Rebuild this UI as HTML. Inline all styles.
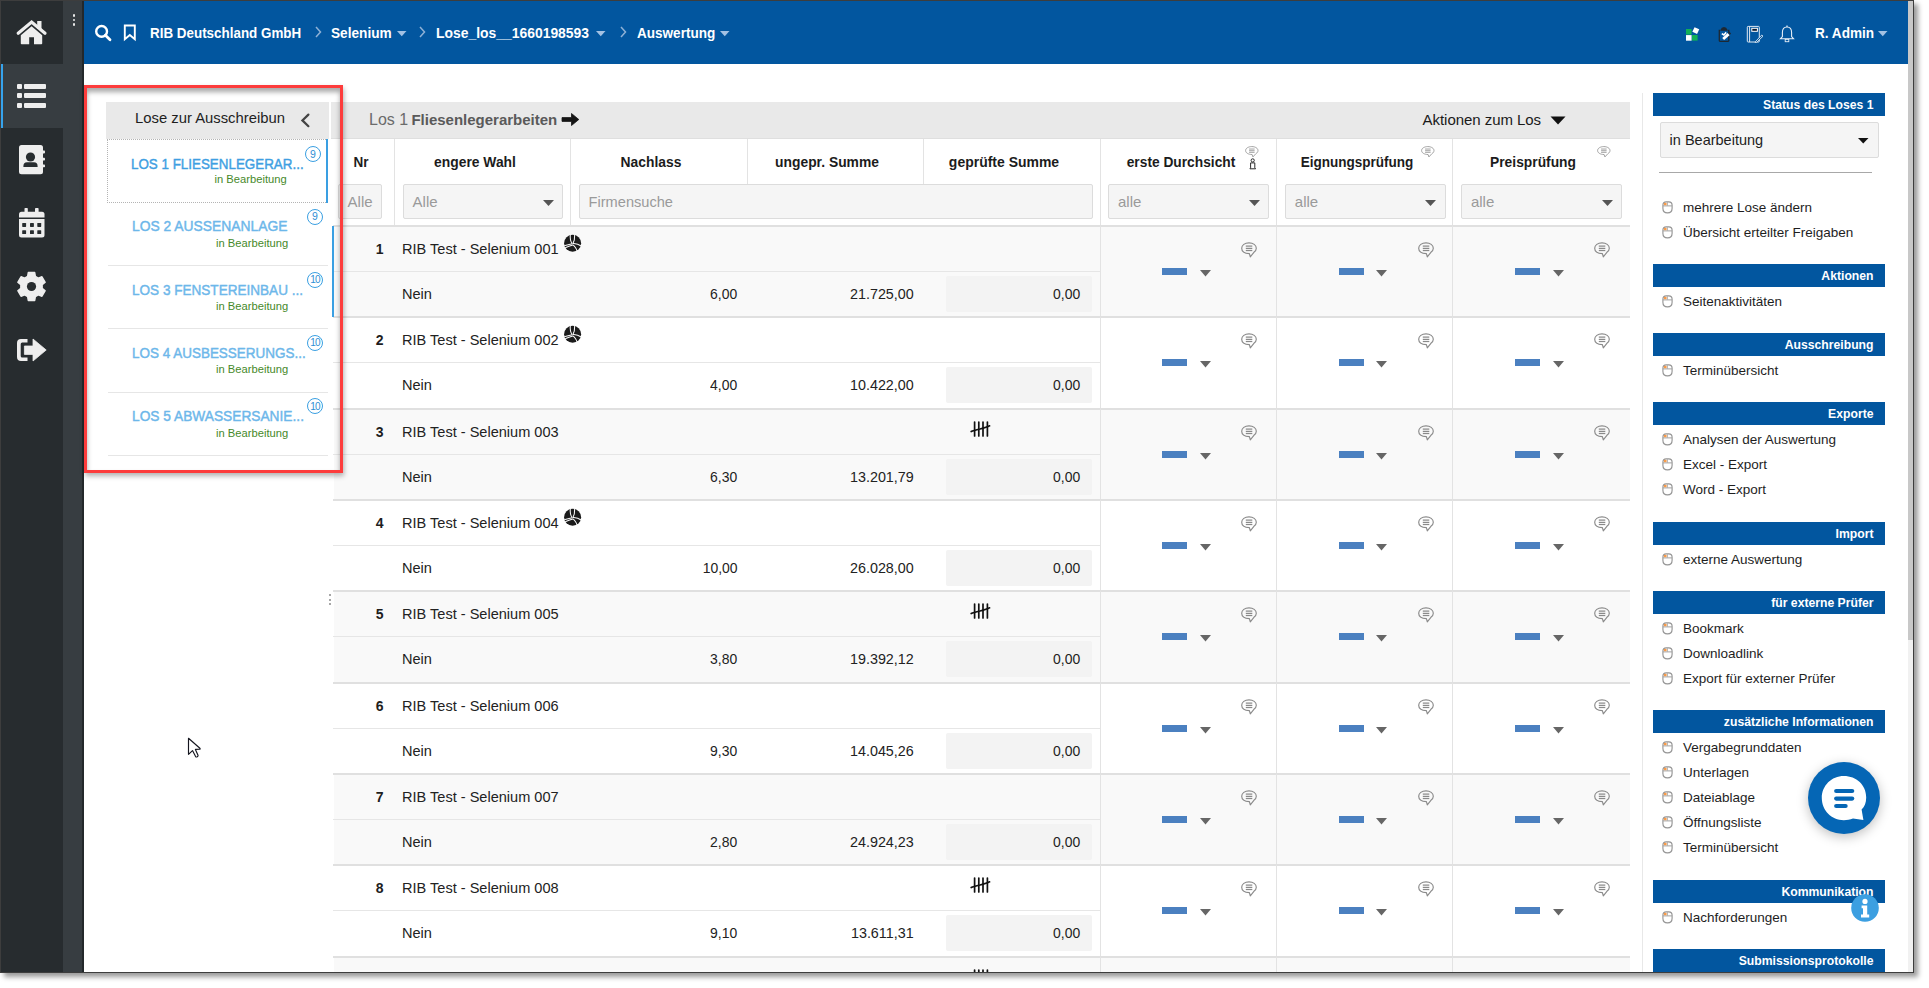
<!DOCTYPE html><html><head><meta charset="utf-8"><style>
html,body{margin:0;padding:0;width:1929px;height:988px;overflow:hidden;background:#fff;font-family:"Liberation Sans",sans-serif;}
.t{position:absolute;line-height:1;white-space:nowrap;}
svg{overflow:visible}
</style></head><body>
<div style="position:absolute;left:0px;top:0px;width:1914px;height:973px;background:#3d3d3d;box-shadow:4px 4px 5px 0 rgba(0,0,0,0.4);"></div>
<div style="position:absolute;left:1px;top:1px;width:1912px;height:971px;background:#fff;"></div>
<div style="position:absolute;left:0;top:0;width:1913px;height:972px;overflow:hidden">
<div style="position:absolute;left:1px;top:1px;width:62px;height:972px;background:#272c2f;"></div>
<div style="position:absolute;left:63px;top:1px;width:19px;height:972px;background:#373d41;"></div>
<div style="position:absolute;left:82px;top:1px;width:2px;height:972px;background:#23282b;"></div>
<div style="position:absolute;left:1px;top:64px;width:62px;height:64px;background:#373d41;"></div>
<div style="position:absolute;left:1px;top:64px;width:2px;height:64px;background:#36a3ec;"></div>
<div style="position:absolute;left:72.7px;top:13.85px;width:2.7px;height:2.7px;border-radius:50%;background:#e8e8e8"></div>
<div style="position:absolute;left:72.7px;top:18.549999999999997px;width:2.7px;height:2.7px;border-radius:50%;background:#e8e8e8"></div>
<div style="position:absolute;left:72.7px;top:23.25px;width:2.7px;height:2.7px;border-radius:50%;background:#e8e8e8"></div>
<svg style="position:absolute;left:17px;top:20px;" width="30" height="25" viewBox="0 0 30 25"><polyline points="1.2,13.2 14.6,2 28,13.2" fill="none" stroke="#eeeeee" stroke-width="3.2" stroke-linecap="round" stroke-linejoin="miter"/><rect x="20.2" y="1" width="4.3" height="8" fill="#eeeeee"/><path d="M3.8,15.2 L14.6,6.2 L25.2,15.2 L25.2,23.4 Q25.2,24.2 24.4,24.2 L17,24.2 L17,17.2 L12.2,17.2 L12.2,24.2 L4.6,24.2 Q3.8,24.2 3.8,23.4 Z" fill="#eeeeee"/></svg>
<div style="position:absolute;left:17.2px;top:84px;width:5.1px;height:5px;background:#eeeeee;border-radius:1px;"></div>
<div style="position:absolute;left:24.3px;top:84px;width:21.7px;height:5px;background:#eeeeee;border-radius:1px;"></div>
<div style="position:absolute;left:17.2px;top:93.3px;width:5.1px;height:5px;background:#eeeeee;border-radius:1px;"></div>
<div style="position:absolute;left:24.3px;top:93.3px;width:21.7px;height:5px;background:#eeeeee;border-radius:1px;"></div>
<div style="position:absolute;left:17.2px;top:102.6px;width:5.1px;height:5px;background:#eeeeee;border-radius:1px;"></div>
<div style="position:absolute;left:24.3px;top:102.6px;width:21.7px;height:5px;background:#eeeeee;border-radius:1px;"></div>
<svg style="position:absolute;left:18px;top:144px;" width="28" height="31" viewBox="0 0 28 31"><rect x="1" y="1" width="24" height="29.2" rx="2.5" fill="#eeeeee"/><rect x="24" y="6.6" width="3" height="2.8" rx="0.8" fill="#eeeeee"/><rect x="24" y="13.8" width="3" height="2.8" rx="0.8" fill="#eeeeee"/><rect x="24" y="20.5" width="3" height="2.8" rx="0.8" fill="#eeeeee"/><circle cx="12.5" cy="13" r="4.6" fill="#272c2f"/><path d="M5.4,22 Q5.4,18.4 9,18.2 L16,18.2 Q19.6,18.4 19.6,22 L19.6,23 L5.4,23 Z" fill="#272c2f"/></svg>
<svg style="position:absolute;left:18px;top:207px;" width="28" height="32" viewBox="0 0 28 32"><rect x="6.5" y="1" width="3.3" height="6" rx="0.8" fill="#eeeeee"/><rect x="17" y="1" width="3.6" height="6" rx="0.8" fill="#eeeeee"/><path d="M1,7.5 Q1,4.8 3.5,4.8 L24,4.8 Q26.5,4.8 26.5,7.5 L26.5,10.4 L1,10.4 Z" fill="#eeeeee"/><path d="M1,12 L26.5,12 L26.5,28 Q26.5,30.5 24,30.5 L3.5,30.5 Q1,30.5 1,28 Z" fill="#eeeeee"/><rect x="4.2" y="16" width="3.9" height="3.9" rx="0.6" fill="#272c2f"/><rect x="4.2" y="23.2" width="3.9" height="3.9" rx="0.6" fill="#272c2f"/><rect x="12" y="16" width="3.9" height="3.9" rx="0.6" fill="#272c2f"/><rect x="12" y="23.2" width="3.9" height="3.9" rx="0.6" fill="#272c2f"/><rect x="19.3" y="16" width="3.9" height="3.9" rx="0.6" fill="#272c2f"/><rect x="19.3" y="23.2" width="3.9" height="3.9" rx="0.6" fill="#272c2f"/></svg>
<svg style="position:absolute;left:18px;top:272px;" width="27" height="29" viewBox="0 0 27 29"><path d="M10.28,0.57 L16.72,0.57 L17.37,4.42 L20.30,6.11 L23.96,4.75 L27.18,10.32 L24.17,12.81 L24.17,16.19 L27.18,18.68 L23.96,24.25 L20.30,22.89 L17.37,24.58 L16.72,28.43 L10.28,28.43 L9.63,24.58 L6.70,22.89 L3.04,24.25 L-0.18,18.68 L2.83,16.19 L2.83,12.81 L-0.18,10.32 L3.04,4.75 L6.70,6.11 L9.63,4.42 Z" fill="#eeeeee" stroke="#eeeeee" stroke-width="1.4" stroke-linejoin="round"/><circle cx="13.5" cy="14.5" r="4.6" fill="#272c2f"/></svg>
<svg style="position:absolute;left:17px;top:338px;" width="30" height="24" viewBox="0 0 30 24"><path d="M10.5,1 L4,1 Q0,1 0,5 L0,19 Q0,23 4,23 L10.5,23 L10.5,19.4 L5.2,19.4 Q3.7,19.4 3.7,17.9 L3.7,6.1 Q3.7,4.6 5.2,4.6 L10.5,4.6 Z" fill="#eeeeee"/><path d="M7.4,8 L16,8 L16,1 L29.2,12 L16,23 L16,16.4 L7.4,16.4 Z" fill="#eeeeee" stroke="#eeeeee" stroke-width="0.8" stroke-linejoin="round"/></svg>
<div style="position:absolute;left:84px;top:1px;width:1824px;height:63px;background:#02569f;"></div>
<svg style="position:absolute;left:94px;top:24px;" width="18" height="18" viewBox="0 0 18 18"><circle cx="7.6" cy="7.4" r="5.4" fill="none" stroke="#fff" stroke-width="2.4"/><line x1="11.4" y1="11.3" x2="16" y2="15.8" stroke="#fff" stroke-width="2.8" stroke-linecap="round"/></svg>
<svg style="position:absolute;left:123px;top:24px;" width="14" height="17" viewBox="0 0 14 17"><path d="M1.8,1.5 L11.8,1.5 L11.8,15.2 L6.8,11 L1.8,15.2 Z" fill="none" stroke="#fff" stroke-width="1.9" stroke-linejoin="miter"/></svg>
<div class="t" style="top:25.03px;font-size:15.2px;font-weight:700;color:#fff;left:149.8px;transform:scaleX(0.8827);transform-origin:0 0;">RIB Deutschland GmbH</div>
<svg style="position:absolute;left:314.5px;top:26px;" width="7" height="12" viewBox="0 0 7 12"><polyline points="1,1 5.5,6 1,11" fill="none" stroke="#8fb1d6" stroke-width="1.5"/></svg>
<div class="t" style="top:25.03px;font-size:15.2px;font-weight:700;color:#fff;left:331.2px;transform:scaleX(0.899);transform-origin:0 0;">Selenium</div>
<svg style="position:absolute;left:397px;top:30.5px;" width="9.5" height="5.3" viewBox="0 0 9.5 5.3"><polygon points="0,0 9.5,0 4.75,5.3" fill="#a3c1e3"/></svg>
<svg style="position:absolute;left:418.5px;top:26px;" width="7" height="12" viewBox="0 0 7 12"><polyline points="1,1 5.5,6 1,11" fill="none" stroke="#8fb1d6" stroke-width="1.5"/></svg>
<div class="t" style="top:25.03px;font-size:15.2px;font-weight:700;color:#fff;left:436.4px;transform:scaleX(0.9154);transform-origin:0 0;">Lose_los__1660198593</div>
<svg style="position:absolute;left:596px;top:30.5px;" width="9.5" height="5.3" viewBox="0 0 9.5 5.3"><polygon points="0,0 9.5,0 4.75,5.3" fill="#a3c1e3"/></svg>
<svg style="position:absolute;left:619.5px;top:26px;" width="7" height="12" viewBox="0 0 7 12"><polyline points="1,1 5.5,6 1,11" fill="none" stroke="#8fb1d6" stroke-width="1.5"/></svg>
<div class="t" style="top:25.03px;font-size:15.2px;font-weight:700;color:#fff;left:636.6px;transform:scaleX(0.8913);transform-origin:0 0;">Auswertung</div>
<svg style="position:absolute;left:720px;top:30.5px;" width="9.5" height="5.3" viewBox="0 0 9.5 5.3"><polygon points="0,0 9.5,0 4.75,5.3" fill="#a3c1e3"/></svg>
<div class="t" style="top:25.03px;font-size:15.2px;font-weight:700;color:#fff;left:1814.6px;transform:scaleX(0.8942);transform-origin:0 0;">R. Admin</div>
<svg style="position:absolute;left:1878px;top:30.5px;" width="9.5" height="5.3" viewBox="0 0 9.5 5.3"><polygon points="0,0 9.5,0 4.75,5.3" fill="#a3c1e3"/></svg>
<svg style="position:absolute;left:1685px;top:26px;" width="16" height="16" viewBox="0 0 16 16"><rect x="1" y="3" width="5.6" height="5.6" fill="#12b057"/><rect x="7" y="9" width="5.6" height="5.6" fill="#12b057"/><rect x="1" y="9.1" width="5.6" height="5.6" fill="#fff"/><rect x="8.2" y="2" width="5.2" height="5.2" fill="#fff" transform="rotate(25 10.8 4.6)"/></svg>
<svg style="position:absolute;left:1718px;top:26px;" width="15" height="17" viewBox="0 0 15 17"><path d="M2.4,4.4 L1.3,4.4 L1.3,14.6 Q1.3,15.3 2,15.3 L10.1,15.3 Q10.8,15.3 10.8,14.6 L10.8,4.4 L9.6,4.4" fill="none" stroke="#1d2833" stroke-width="1.3"/><path d="M2.8,4.8 L2.8,3.6 Q3.2,1.2 6,1.1 Q8.8,1.2 9.2,3.6 L9.2,4.8 Z" fill="#1d2833"/><polyline points="3.8,7.6 5.9,9 8.2,6.4" fill="none" stroke="#fff" stroke-width="1.6"/><line x1="5.2" y1="13" x2="10.6" y2="8.1" stroke="#fff" stroke-width="2.8"/><line x1="10.6" y1="6.1" x2="12.6" y2="7.9" stroke="#1d2833" stroke-width="1.3"/></svg>
<svg style="position:absolute;left:1746px;top:25px;" width="18" height="18" viewBox="0 0 18 18"><rect x="1.3" y="1.4" width="12" height="15.6" rx="0.8" fill="none" stroke="#dfe8f2" stroke-width="1"/><line x1="3.6" y1="1.4" x2="3.6" y2="17" stroke="#dfe8f2" stroke-width="1"/><rect x="5.8" y="3.3" width="5.6" height="3" fill="#0a1a30" stroke="#fff" stroke-width="1"/><path d="M9.5,16.5 L15.8,10 L17,11.2 L10.8,17.2 L9,17.4 Z" fill="#02569f" stroke="#dfe8f2" stroke-width="0.9"/></svg>
<svg style="position:absolute;left:1779px;top:25px;" width="16" height="18" viewBox="0 0 16 18"><path d="M8,2 Q12.6,2 12.6,7.5 L12.6,11.5 L14.6,13.8 L1.4,13.8 L3.4,11.5 L3.4,7.5 Q3.4,2 8,2 Z" fill="none" stroke="#e6eef7" stroke-width="1.1"/><line x1="8" y1="0.6" x2="8" y2="2" stroke="#e6eef7" stroke-width="1.2"/><rect x="6.2" y="14.3" width="3.6" height="2.4" fill="none" stroke="#e6eef7" stroke-width="0.9"/></svg>
<div style="position:absolute;left:331px;top:102px;width:1299px;height:37px;background:#e9e9e9;"></div>
<div style="position:absolute;left:331px;top:138px;width:1299px;height:1px;background:#dfdfdf;"></div>
<div class="t" style="top:111.55px;font-size:16px;font-weight:400;color:#6b6b6b;left:369px;">Los 1</div>
<div class="t" style="top:112.40px;font-size:15px;font-weight:700;color:#5a5a5a;left:411.4px;">Fliesenlegerarbeiten</div>
<svg style="position:absolute;left:561px;top:112px;" width="19" height="15" viewBox="0 0 19 15"><path d="M1,5.6 L10.5,5.6 L10.5,1.5 L17.8,7.5 L10.5,13.5 L10.5,9.4 L1,9.4 Z" fill="#151515" stroke="#151515" stroke-width="0.8" stroke-linejoin="round"/></svg>
<div class="t" style="top:112.30px;font-size:15px;font-weight:400;color:#1a1a1a;letter-spacing:-0.05px;left:1422.6px;">Aktionen zum Los</div>
<svg style="position:absolute;left:1550px;top:115.5px;" width="16" height="9" viewBox="0 0 16 9"><polygon points="0.5,0.5 15.5,0.5 8,8.5" fill="#111"/></svg>
<div style="position:absolute;left:394px;top:139px;width:1px;height:87px;background:#e3e3e3;"></div>
<div style="position:absolute;left:570px;top:139px;width:1px;height:87px;background:#e3e3e3;"></div>
<div style="position:absolute;left:747px;top:139px;width:1px;height:45px;background:#e3e3e3;"></div>
<div style="position:absolute;left:923px;top:139px;width:1px;height:45px;background:#e3e3e3;"></div>
<div style="position:absolute;left:1100px;top:139px;width:1px;height:87px;background:#e3e3e3;"></div>
<div style="position:absolute;left:1276px;top:139px;width:1px;height:87px;background:#e3e3e3;"></div>
<div style="position:absolute;left:1452px;top:139px;width:1px;height:87px;background:#e3e3e3;"></div>
<div class="t" style="top:154.10px;font-size:15px;font-weight:700;color:#1c1c1c;left:360.5px;transform:translateX(-50%) scaleX(0.9);transform-origin:50% 0;">Nr</div>
<div class="t" style="top:154.10px;font-size:15px;font-weight:700;color:#1c1c1c;left:474.6px;transform:translateX(-50%) scaleX(0.923);transform-origin:50% 0;">engere Wahl</div>
<div class="t" style="top:154.10px;font-size:15px;font-weight:700;color:#1c1c1c;left:651.3px;transform:translateX(-50%) scaleX(0.924);transform-origin:50% 0;">Nachlass</div>
<div class="t" style="top:154.10px;font-size:15px;font-weight:700;color:#1c1c1c;left:827.4px;transform:translateX(-50%) scaleX(0.923);transform-origin:50% 0;">ungepr. Summe</div>
<div class="t" style="top:154.10px;font-size:15px;font-weight:700;color:#1c1c1c;left:1004px;transform:translateX(-50%) scaleX(0.932);transform-origin:50% 0;">geprüfte Summe</div>
<div class="t" style="top:154.10px;font-size:15px;font-weight:700;color:#1c1c1c;left:1180.6px;transform:translateX(-50%) scaleX(0.917);transform-origin:50% 0;">erste Durchsicht</div>
<div class="t" style="top:154.10px;font-size:15px;font-weight:700;color:#1c1c1c;left:1356.7px;transform:translateX(-50%) scaleX(0.902);transform-origin:50% 0;">Eignungsprüfung</div>
<div class="t" style="top:154.10px;font-size:15px;font-weight:700;color:#1c1c1c;left:1533.3px;transform:translateX(-50%) scaleX(0.921);transform-origin:50% 0;">Preisprüfung</div>
<svg style="position:absolute;left:1244.6px;top:145.5px;" width="13.6" height="11.84" viewBox="0 0 13.6 11.84"><g transform="scale(0.85,0.74)"><path d="M8.4,11.6 C3.6,11.4 0.7,9.1 0.7,6.2 C0.7,3.1 3.8,0.8 8,0.8 C12.2,0.8 15.3,3.1 15.3,6.2 C15.3,7.9 14.3,9.3 12.9,10.3 L9.3,14.8 Z" fill="none" stroke="#9a9a9a" stroke-width="1.15" stroke-linejoin="round"/><g stroke="#9a9a9a" stroke-width="1.25"><line x1="4.8" y1="4.1" x2="11.3" y2="4.1"/><line x1="4.8" y1="6.4" x2="11.3" y2="6.4"/><line x1="4.8" y1="8.5" x2="11.3" y2="8.5"/></g></g></svg>
<svg style="position:absolute;left:1249px;top:157.5px;" width="9" height="13" viewBox="0 0 9 13"><circle cx="3.7" cy="2.4" r="1.6" fill="#fff" stroke="#2a2a2a" stroke-width="1"/><path d="M1.6,4.9 L5.8,4.9 L5.8,9.9 L6.6,10.8 L0.9,10.8 L1.6,9.9 Z" fill="#fff" stroke="#2a2a2a" stroke-width="1" stroke-linejoin="round"/></svg>
<svg style="position:absolute;left:1420.8px;top:145.5px;" width="13.6" height="11.84" viewBox="0 0 13.6 11.84"><g transform="scale(0.85,0.74)"><path d="M8.4,11.6 C3.6,11.4 0.7,9.1 0.7,6.2 C0.7,3.1 3.8,0.8 8,0.8 C12.2,0.8 15.3,3.1 15.3,6.2 C15.3,7.9 14.3,9.3 12.9,10.3 L9.3,14.8 Z" fill="none" stroke="#9a9a9a" stroke-width="1.15" stroke-linejoin="round"/><g stroke="#9a9a9a" stroke-width="1.25"><line x1="4.8" y1="4.1" x2="11.3" y2="4.1"/><line x1="4.8" y1="6.4" x2="11.3" y2="6.4"/><line x1="4.8" y1="8.5" x2="11.3" y2="8.5"/></g></g></svg>
<svg style="position:absolute;left:1597px;top:145.5px;" width="13.6" height="11.84" viewBox="0 0 13.6 11.84"><g transform="scale(0.85,0.74)"><path d="M8.4,11.6 C3.6,11.4 0.7,9.1 0.7,6.2 C0.7,3.1 3.8,0.8 8,0.8 C12.2,0.8 15.3,3.1 15.3,6.2 C15.3,7.9 14.3,9.3 12.9,10.3 L9.3,14.8 Z" fill="none" stroke="#9a9a9a" stroke-width="1.15" stroke-linejoin="round"/><g stroke="#9a9a9a" stroke-width="1.25"><line x1="4.8" y1="4.1" x2="11.3" y2="4.1"/><line x1="4.8" y1="6.4" x2="11.3" y2="6.4"/><line x1="4.8" y1="8.5" x2="11.3" y2="8.5"/></g></g></svg>
<div style="position:absolute;left:338px;top:184px;width:44px;height:35px;background:#f5f5f5;border:1px solid #dcdcdc;border-radius:2px;box-sizing:border-box;"></div>
<div class="t" style="top:194.20px;font-size:15px;font-weight:400;color:#9a9a9a;left:347.6px;">Alle</div>
<div style="position:absolute;left:403px;top:184px;width:160px;height:35px;background:#f5f5f5;border:1px solid #dcdcdc;border-radius:2px;box-sizing:border-box;"></div>
<div class="t" style="top:194.20px;font-size:15px;font-weight:400;color:#9a9a9a;left:412.6px;">Alle</div>
<svg style="position:absolute;left:542.7px;top:199.6px;" width="11" height="6" viewBox="0 0 11 6"><polygon points="0,0 11,0 5.5,6" fill="#555"/></svg>
<div style="position:absolute;left:579px;top:184px;width:514px;height:35px;background:#f5f5f5;border:1px solid #dcdcdc;border-radius:2px;box-sizing:border-box;"></div>
<div class="t" style="top:194.54px;font-size:14.6px;font-weight:400;color:#9a9a9a;left:588.6px;">Firmensuche</div>
<div style="position:absolute;left:1108.4px;top:184px;width:160.6px;height:35px;background:#f5f5f5;border:1px solid #dcdcdc;border-radius:2px;box-sizing:border-box;"></div>
<div class="t" style="top:194.20px;font-size:15px;font-weight:400;color:#9a9a9a;left:1118.0px;">alle</div>
<svg style="position:absolute;left:1248.7px;top:199.6px;" width="11" height="6" viewBox="0 0 11 6"><polygon points="0,0 11,0 5.5,6" fill="#555"/></svg>
<div style="position:absolute;left:1285.2px;top:184px;width:160.5px;height:35px;background:#f5f5f5;border:1px solid #dcdcdc;border-radius:2px;box-sizing:border-box;"></div>
<div class="t" style="top:194.20px;font-size:15px;font-weight:400;color:#9a9a9a;left:1294.8px;">alle</div>
<svg style="position:absolute;left:1425.4px;top:199.6px;" width="11" height="6" viewBox="0 0 11 6"><polygon points="0,0 11,0 5.5,6" fill="#555"/></svg>
<div style="position:absolute;left:1461.3px;top:184px;width:160.5px;height:35px;background:#f5f5f5;border:1px solid #dcdcdc;border-radius:2px;box-sizing:border-box;"></div>
<div class="t" style="top:194.20px;font-size:15px;font-weight:400;color:#9a9a9a;left:1470.8999999999999px;">alle</div>
<svg style="position:absolute;left:1601.5px;top:199.6px;" width="11" height="6" viewBox="0 0 11 6"><polygon points="0,0 11,0 5.5,6" fill="#555"/></svg>
<div style="position:absolute;left:333px;top:225px;width:1297px;height:2px;background:#e0e0e0;"></div>
<div style="position:absolute;left:334px;top:226px;width:1296px;height:91px;background:#f9f9f9;"></div>
<div style="position:absolute;left:333px;top:225px;width:1297px;height:2px;background:#e0e0e0;"></div>
<div style="position:absolute;left:333px;top:271px;width:767px;height:1px;background:#e6e6e6;"></div>
<div style="position:absolute;left:1100px;top:226px;width:1px;height:91px;background:#e3e3e3;"></div>
<div style="position:absolute;left:1276px;top:226px;width:1px;height:91px;background:#e3e3e3;"></div>
<div style="position:absolute;left:1452px;top:226px;width:1px;height:91px;background:#e3e3e3;"></div>
<div class="t" style="top:242.15px;font-size:14px;font-weight:700;color:#1e1e1e;right:1529.5px;">1</div>
<div class="t" style="top:241.30px;font-size:15px;font-weight:400;color:#222;left:402.4px;transform:scaleX(0.97);transform-origin:0 0;">RIB Test - Selenium 001</div>
<svg style="position:absolute;left:562.0px;top:232.0px;" width="22" height="22" viewBox="0 0 22 22"><circle cx="10.6" cy="11.2" r="8.5" fill="#1b1b1b"/><g fill="none" stroke="#fafafa" stroke-width="1.05"><path d="M8.3,2.4 Q7.7,8.2 10.2,11.8"/><path d="M12.7,2.6 Q12.9,8.4 10.8,11.8"/><path d="M10.8,11.6 Q15.2,11.2 19.6,14.2"/><path d="M10.6,12.6 Q13.8,14.6 15.4,19.8"/><path d="M10.2,11.8 Q6,12.8 2.2,13.8"/><path d="M3.2,15.8 Q7,14 10.8,13"/></g></svg>
<div class="t" style="top:285.70px;font-size:15px;font-weight:400;color:#222;left:402.4px;transform:scaleX(0.97);transform-origin:0 0;">Nein</div>
<div class="t" style="top:285.70px;font-size:15px;font-weight:400;color:#222;right:1175.6px;transform:scaleX(0.93);transform-origin:100% 0;">6,00</div>
<div class="t" style="top:285.70px;font-size:15px;font-weight:400;color:#222;right:999.6px;transform:scaleX(0.955);transform-origin:100% 0;">21.725,00</div>
<div style="position:absolute;left:946px;top:276px;width:145.5px;height:35.5px;background:#f3f3f3;border-radius:2px;"></div>
<div class="t" style="top:285.70px;font-size:15px;font-weight:400;color:#222;right:832.4000000000001px;transform:scaleX(0.93);transform-origin:100% 0;">0,00</div>
<svg style="position:absolute;left:1241px;top:241.5px;" width="16.0" height="16.0" viewBox="0 0 16.0 16.0"><g transform="scale(1.0,1.0)"><path d="M8.4,11.6 C3.6,11.4 0.7,9.1 0.7,6.2 C0.7,3.1 3.8,0.8 8,0.8 C12.2,0.8 15.3,3.1 15.3,6.2 C15.3,7.9 14.3,9.3 12.9,10.3 L9.3,14.8 Z" fill="none" stroke="#8a8a8a" stroke-width="1.15" stroke-linejoin="round"/><g stroke="#8a8a8a" stroke-width="1.25"><line x1="4.8" y1="4.1" x2="11.3" y2="4.1"/><line x1="4.8" y1="6.4" x2="11.3" y2="6.4"/><line x1="4.8" y1="8.5" x2="11.3" y2="8.5"/></g></g></svg>
<div style="position:absolute;left:1162px;top:267.7px;width:25.2px;height:7.2px;background:#4b80c0;"></div>
<svg style="position:absolute;left:1199.8px;top:269.5px;" width="11" height="6.5" viewBox="0 0 11 6.5"><polygon points="0,0 11,0 5.5,6.5" fill="#666"/></svg>
<svg style="position:absolute;left:1417.6px;top:241.5px;" width="16.0" height="16.0" viewBox="0 0 16.0 16.0"><g transform="scale(1.0,1.0)"><path d="M8.4,11.6 C3.6,11.4 0.7,9.1 0.7,6.2 C0.7,3.1 3.8,0.8 8,0.8 C12.2,0.8 15.3,3.1 15.3,6.2 C15.3,7.9 14.3,9.3 12.9,10.3 L9.3,14.8 Z" fill="none" stroke="#8a8a8a" stroke-width="1.15" stroke-linejoin="round"/><g stroke="#8a8a8a" stroke-width="1.25"><line x1="4.8" y1="4.1" x2="11.3" y2="4.1"/><line x1="4.8" y1="6.4" x2="11.3" y2="6.4"/><line x1="4.8" y1="8.5" x2="11.3" y2="8.5"/></g></g></svg>
<div style="position:absolute;left:1338.6px;top:267.7px;width:25.2px;height:7.2px;background:#4b80c0;"></div>
<svg style="position:absolute;left:1376.3999999999999px;top:269.5px;" width="11" height="6.5" viewBox="0 0 11 6.5"><polygon points="0,0 11,0 5.5,6.5" fill="#666"/></svg>
<svg style="position:absolute;left:1594.2px;top:241.5px;" width="16.0" height="16.0" viewBox="0 0 16.0 16.0"><g transform="scale(1.0,1.0)"><path d="M8.4,11.6 C3.6,11.4 0.7,9.1 0.7,6.2 C0.7,3.1 3.8,0.8 8,0.8 C12.2,0.8 15.3,3.1 15.3,6.2 C15.3,7.9 14.3,9.3 12.9,10.3 L9.3,14.8 Z" fill="none" stroke="#8a8a8a" stroke-width="1.15" stroke-linejoin="round"/><g stroke="#8a8a8a" stroke-width="1.25"><line x1="4.8" y1="4.1" x2="11.3" y2="4.1"/><line x1="4.8" y1="6.4" x2="11.3" y2="6.4"/><line x1="4.8" y1="8.5" x2="11.3" y2="8.5"/></g></g></svg>
<div style="position:absolute;left:1515.2px;top:267.7px;width:25.2px;height:7.2px;background:#4b80c0;"></div>
<svg style="position:absolute;left:1553.0px;top:269.5px;" width="11" height="6.5" viewBox="0 0 11 6.5"><polygon points="0,0 11,0 5.5,6.5" fill="#666"/></svg>
<div style="position:absolute;left:334px;top:317px;width:1296px;height:92px;background:#ffffff;"></div>
<div style="position:absolute;left:333px;top:316px;width:1297px;height:2px;background:#e0e0e0;"></div>
<div style="position:absolute;left:333px;top:362px;width:767px;height:1px;background:#e6e6e6;"></div>
<div style="position:absolute;left:1100px;top:317px;width:1px;height:92px;background:#e3e3e3;"></div>
<div style="position:absolute;left:1276px;top:317px;width:1px;height:92px;background:#e3e3e3;"></div>
<div style="position:absolute;left:1452px;top:317px;width:1px;height:92px;background:#e3e3e3;"></div>
<div class="t" style="top:333.15px;font-size:14px;font-weight:700;color:#1e1e1e;right:1529.5px;">2</div>
<div class="t" style="top:332.30px;font-size:15px;font-weight:400;color:#222;left:402.4px;transform:scaleX(0.97);transform-origin:0 0;">RIB Test - Selenium 002</div>
<svg style="position:absolute;left:562.0px;top:323.0px;" width="22" height="22" viewBox="0 0 22 22"><circle cx="10.6" cy="11.2" r="8.5" fill="#1b1b1b"/><g fill="none" stroke="#fafafa" stroke-width="1.05"><path d="M8.3,2.4 Q7.7,8.2 10.2,11.8"/><path d="M12.7,2.6 Q12.9,8.4 10.8,11.8"/><path d="M10.8,11.6 Q15.2,11.2 19.6,14.2"/><path d="M10.6,12.6 Q13.8,14.6 15.4,19.8"/><path d="M10.2,11.8 Q6,12.8 2.2,13.8"/><path d="M3.2,15.8 Q7,14 10.8,13"/></g></svg>
<div class="t" style="top:376.70px;font-size:15px;font-weight:400;color:#222;left:402.4px;transform:scaleX(0.97);transform-origin:0 0;">Nein</div>
<div class="t" style="top:376.70px;font-size:15px;font-weight:400;color:#222;right:1175.6px;transform:scaleX(0.93);transform-origin:100% 0;">4,00</div>
<div class="t" style="top:376.70px;font-size:15px;font-weight:400;color:#222;right:999.6px;transform:scaleX(0.955);transform-origin:100% 0;">10.422,00</div>
<div style="position:absolute;left:946px;top:367px;width:145.5px;height:35.5px;background:#f3f3f3;border-radius:2px;"></div>
<div class="t" style="top:376.70px;font-size:15px;font-weight:400;color:#222;right:832.4000000000001px;transform:scaleX(0.93);transform-origin:100% 0;">0,00</div>
<svg style="position:absolute;left:1241px;top:332.5px;" width="16.0" height="16.0" viewBox="0 0 16.0 16.0"><g transform="scale(1.0,1.0)"><path d="M8.4,11.6 C3.6,11.4 0.7,9.1 0.7,6.2 C0.7,3.1 3.8,0.8 8,0.8 C12.2,0.8 15.3,3.1 15.3,6.2 C15.3,7.9 14.3,9.3 12.9,10.3 L9.3,14.8 Z" fill="none" stroke="#8a8a8a" stroke-width="1.15" stroke-linejoin="round"/><g stroke="#8a8a8a" stroke-width="1.25"><line x1="4.8" y1="4.1" x2="11.3" y2="4.1"/><line x1="4.8" y1="6.4" x2="11.3" y2="6.4"/><line x1="4.8" y1="8.5" x2="11.3" y2="8.5"/></g></g></svg>
<div style="position:absolute;left:1162px;top:358.7px;width:25.2px;height:7.2px;background:#4b80c0;"></div>
<svg style="position:absolute;left:1199.8px;top:360.5px;" width="11" height="6.5" viewBox="0 0 11 6.5"><polygon points="0,0 11,0 5.5,6.5" fill="#666"/></svg>
<svg style="position:absolute;left:1417.6px;top:332.5px;" width="16.0" height="16.0" viewBox="0 0 16.0 16.0"><g transform="scale(1.0,1.0)"><path d="M8.4,11.6 C3.6,11.4 0.7,9.1 0.7,6.2 C0.7,3.1 3.8,0.8 8,0.8 C12.2,0.8 15.3,3.1 15.3,6.2 C15.3,7.9 14.3,9.3 12.9,10.3 L9.3,14.8 Z" fill="none" stroke="#8a8a8a" stroke-width="1.15" stroke-linejoin="round"/><g stroke="#8a8a8a" stroke-width="1.25"><line x1="4.8" y1="4.1" x2="11.3" y2="4.1"/><line x1="4.8" y1="6.4" x2="11.3" y2="6.4"/><line x1="4.8" y1="8.5" x2="11.3" y2="8.5"/></g></g></svg>
<div style="position:absolute;left:1338.6px;top:358.7px;width:25.2px;height:7.2px;background:#4b80c0;"></div>
<svg style="position:absolute;left:1376.3999999999999px;top:360.5px;" width="11" height="6.5" viewBox="0 0 11 6.5"><polygon points="0,0 11,0 5.5,6.5" fill="#666"/></svg>
<svg style="position:absolute;left:1594.2px;top:332.5px;" width="16.0" height="16.0" viewBox="0 0 16.0 16.0"><g transform="scale(1.0,1.0)"><path d="M8.4,11.6 C3.6,11.4 0.7,9.1 0.7,6.2 C0.7,3.1 3.8,0.8 8,0.8 C12.2,0.8 15.3,3.1 15.3,6.2 C15.3,7.9 14.3,9.3 12.9,10.3 L9.3,14.8 Z" fill="none" stroke="#8a8a8a" stroke-width="1.15" stroke-linejoin="round"/><g stroke="#8a8a8a" stroke-width="1.25"><line x1="4.8" y1="4.1" x2="11.3" y2="4.1"/><line x1="4.8" y1="6.4" x2="11.3" y2="6.4"/><line x1="4.8" y1="8.5" x2="11.3" y2="8.5"/></g></g></svg>
<div style="position:absolute;left:1515.2px;top:358.7px;width:25.2px;height:7.2px;background:#4b80c0;"></div>
<svg style="position:absolute;left:1553.0px;top:360.5px;" width="11" height="6.5" viewBox="0 0 11 6.5"><polygon points="0,0 11,0 5.5,6.5" fill="#666"/></svg>
<div style="position:absolute;left:334px;top:409px;width:1296px;height:91px;background:#f9f9f9;"></div>
<div style="position:absolute;left:333px;top:408px;width:1297px;height:2px;background:#e0e0e0;"></div>
<div style="position:absolute;left:333px;top:454px;width:767px;height:1px;background:#e6e6e6;"></div>
<div style="position:absolute;left:1100px;top:409px;width:1px;height:91px;background:#e3e3e3;"></div>
<div style="position:absolute;left:1276px;top:409px;width:1px;height:91px;background:#e3e3e3;"></div>
<div style="position:absolute;left:1452px;top:409px;width:1px;height:91px;background:#e3e3e3;"></div>
<div class="t" style="top:425.15px;font-size:14px;font-weight:700;color:#1e1e1e;right:1529.5px;">3</div>
<div class="t" style="top:424.30px;font-size:15px;font-weight:400;color:#222;left:402.4px;transform:scaleX(0.97);transform-origin:0 0;">RIB Test - Selenium 003</div>
<svg style="position:absolute;left:969.5px;top:421px;" width="22" height="16" viewBox="0 0 22 16"><g stroke="#111" stroke-width="1.7" stroke-linecap="round"><line x1="4.6" y1="1" x2="4.6" y2="15"/><line x1="8.8" y1="1" x2="8.8" y2="15"/><line x1="13" y1="1" x2="13" y2="15"/><line x1="17.4" y1="1" x2="17.4" y2="15"/><path d="M1.2,10.6 Q3,9.6 10,8 Q17,6.2 19.6,4.8" fill="none"/></g></svg>
<div class="t" style="top:468.70px;font-size:15px;font-weight:400;color:#222;left:402.4px;transform:scaleX(0.97);transform-origin:0 0;">Nein</div>
<div class="t" style="top:468.70px;font-size:15px;font-weight:400;color:#222;right:1175.6px;transform:scaleX(0.93);transform-origin:100% 0;">6,30</div>
<div class="t" style="top:468.70px;font-size:15px;font-weight:400;color:#222;right:999.6px;transform:scaleX(0.955);transform-origin:100% 0;">13.201,79</div>
<div style="position:absolute;left:946px;top:459px;width:145.5px;height:35.5px;background:#f3f3f3;border-radius:2px;"></div>
<div class="t" style="top:468.70px;font-size:15px;font-weight:400;color:#222;right:832.4000000000001px;transform:scaleX(0.93);transform-origin:100% 0;">0,00</div>
<svg style="position:absolute;left:1241px;top:424.5px;" width="16.0" height="16.0" viewBox="0 0 16.0 16.0"><g transform="scale(1.0,1.0)"><path d="M8.4,11.6 C3.6,11.4 0.7,9.1 0.7,6.2 C0.7,3.1 3.8,0.8 8,0.8 C12.2,0.8 15.3,3.1 15.3,6.2 C15.3,7.9 14.3,9.3 12.9,10.3 L9.3,14.8 Z" fill="none" stroke="#8a8a8a" stroke-width="1.15" stroke-linejoin="round"/><g stroke="#8a8a8a" stroke-width="1.25"><line x1="4.8" y1="4.1" x2="11.3" y2="4.1"/><line x1="4.8" y1="6.4" x2="11.3" y2="6.4"/><line x1="4.8" y1="8.5" x2="11.3" y2="8.5"/></g></g></svg>
<div style="position:absolute;left:1162px;top:450.7px;width:25.2px;height:7.2px;background:#4b80c0;"></div>
<svg style="position:absolute;left:1199.8px;top:452.5px;" width="11" height="6.5" viewBox="0 0 11 6.5"><polygon points="0,0 11,0 5.5,6.5" fill="#666"/></svg>
<svg style="position:absolute;left:1417.6px;top:424.5px;" width="16.0" height="16.0" viewBox="0 0 16.0 16.0"><g transform="scale(1.0,1.0)"><path d="M8.4,11.6 C3.6,11.4 0.7,9.1 0.7,6.2 C0.7,3.1 3.8,0.8 8,0.8 C12.2,0.8 15.3,3.1 15.3,6.2 C15.3,7.9 14.3,9.3 12.9,10.3 L9.3,14.8 Z" fill="none" stroke="#8a8a8a" stroke-width="1.15" stroke-linejoin="round"/><g stroke="#8a8a8a" stroke-width="1.25"><line x1="4.8" y1="4.1" x2="11.3" y2="4.1"/><line x1="4.8" y1="6.4" x2="11.3" y2="6.4"/><line x1="4.8" y1="8.5" x2="11.3" y2="8.5"/></g></g></svg>
<div style="position:absolute;left:1338.6px;top:450.7px;width:25.2px;height:7.2px;background:#4b80c0;"></div>
<svg style="position:absolute;left:1376.3999999999999px;top:452.5px;" width="11" height="6.5" viewBox="0 0 11 6.5"><polygon points="0,0 11,0 5.5,6.5" fill="#666"/></svg>
<svg style="position:absolute;left:1594.2px;top:424.5px;" width="16.0" height="16.0" viewBox="0 0 16.0 16.0"><g transform="scale(1.0,1.0)"><path d="M8.4,11.6 C3.6,11.4 0.7,9.1 0.7,6.2 C0.7,3.1 3.8,0.8 8,0.8 C12.2,0.8 15.3,3.1 15.3,6.2 C15.3,7.9 14.3,9.3 12.9,10.3 L9.3,14.8 Z" fill="none" stroke="#8a8a8a" stroke-width="1.15" stroke-linejoin="round"/><g stroke="#8a8a8a" stroke-width="1.25"><line x1="4.8" y1="4.1" x2="11.3" y2="4.1"/><line x1="4.8" y1="6.4" x2="11.3" y2="6.4"/><line x1="4.8" y1="8.5" x2="11.3" y2="8.5"/></g></g></svg>
<div style="position:absolute;left:1515.2px;top:450.7px;width:25.2px;height:7.2px;background:#4b80c0;"></div>
<svg style="position:absolute;left:1553.0px;top:452.5px;" width="11" height="6.5" viewBox="0 0 11 6.5"><polygon points="0,0 11,0 5.5,6.5" fill="#666"/></svg>
<div style="position:absolute;left:334px;top:500px;width:1296px;height:91px;background:#ffffff;"></div>
<div style="position:absolute;left:333px;top:499px;width:1297px;height:2px;background:#e0e0e0;"></div>
<div style="position:absolute;left:333px;top:545px;width:767px;height:1px;background:#e6e6e6;"></div>
<div style="position:absolute;left:1100px;top:500px;width:1px;height:91px;background:#e3e3e3;"></div>
<div style="position:absolute;left:1276px;top:500px;width:1px;height:91px;background:#e3e3e3;"></div>
<div style="position:absolute;left:1452px;top:500px;width:1px;height:91px;background:#e3e3e3;"></div>
<div class="t" style="top:516.15px;font-size:14px;font-weight:700;color:#1e1e1e;right:1529.5px;">4</div>
<div class="t" style="top:515.30px;font-size:15px;font-weight:400;color:#222;left:402.4px;transform:scaleX(0.97);transform-origin:0 0;">RIB Test - Selenium 004</div>
<svg style="position:absolute;left:562.0px;top:506.0px;" width="22" height="22" viewBox="0 0 22 22"><circle cx="10.6" cy="11.2" r="8.5" fill="#1b1b1b"/><g fill="none" stroke="#fafafa" stroke-width="1.05"><path d="M8.3,2.4 Q7.7,8.2 10.2,11.8"/><path d="M12.7,2.6 Q12.9,8.4 10.8,11.8"/><path d="M10.8,11.6 Q15.2,11.2 19.6,14.2"/><path d="M10.6,12.6 Q13.8,14.6 15.4,19.8"/><path d="M10.2,11.8 Q6,12.8 2.2,13.8"/><path d="M3.2,15.8 Q7,14 10.8,13"/></g></svg>
<div class="t" style="top:559.70px;font-size:15px;font-weight:400;color:#222;left:402.4px;transform:scaleX(0.97);transform-origin:0 0;">Nein</div>
<div class="t" style="top:559.70px;font-size:15px;font-weight:400;color:#222;right:1175.6px;transform:scaleX(0.93);transform-origin:100% 0;">10,00</div>
<div class="t" style="top:559.70px;font-size:15px;font-weight:400;color:#222;right:999.6px;transform:scaleX(0.955);transform-origin:100% 0;">26.028,00</div>
<div style="position:absolute;left:946px;top:550px;width:145.5px;height:35.5px;background:#f3f3f3;border-radius:2px;"></div>
<div class="t" style="top:559.70px;font-size:15px;font-weight:400;color:#222;right:832.4000000000001px;transform:scaleX(0.93);transform-origin:100% 0;">0,00</div>
<svg style="position:absolute;left:1241px;top:515.5px;" width="16.0" height="16.0" viewBox="0 0 16.0 16.0"><g transform="scale(1.0,1.0)"><path d="M8.4,11.6 C3.6,11.4 0.7,9.1 0.7,6.2 C0.7,3.1 3.8,0.8 8,0.8 C12.2,0.8 15.3,3.1 15.3,6.2 C15.3,7.9 14.3,9.3 12.9,10.3 L9.3,14.8 Z" fill="none" stroke="#8a8a8a" stroke-width="1.15" stroke-linejoin="round"/><g stroke="#8a8a8a" stroke-width="1.25"><line x1="4.8" y1="4.1" x2="11.3" y2="4.1"/><line x1="4.8" y1="6.4" x2="11.3" y2="6.4"/><line x1="4.8" y1="8.5" x2="11.3" y2="8.5"/></g></g></svg>
<div style="position:absolute;left:1162px;top:541.7px;width:25.2px;height:7.2px;background:#4b80c0;"></div>
<svg style="position:absolute;left:1199.8px;top:543.5px;" width="11" height="6.5" viewBox="0 0 11 6.5"><polygon points="0,0 11,0 5.5,6.5" fill="#666"/></svg>
<svg style="position:absolute;left:1417.6px;top:515.5px;" width="16.0" height="16.0" viewBox="0 0 16.0 16.0"><g transform="scale(1.0,1.0)"><path d="M8.4,11.6 C3.6,11.4 0.7,9.1 0.7,6.2 C0.7,3.1 3.8,0.8 8,0.8 C12.2,0.8 15.3,3.1 15.3,6.2 C15.3,7.9 14.3,9.3 12.9,10.3 L9.3,14.8 Z" fill="none" stroke="#8a8a8a" stroke-width="1.15" stroke-linejoin="round"/><g stroke="#8a8a8a" stroke-width="1.25"><line x1="4.8" y1="4.1" x2="11.3" y2="4.1"/><line x1="4.8" y1="6.4" x2="11.3" y2="6.4"/><line x1="4.8" y1="8.5" x2="11.3" y2="8.5"/></g></g></svg>
<div style="position:absolute;left:1338.6px;top:541.7px;width:25.2px;height:7.2px;background:#4b80c0;"></div>
<svg style="position:absolute;left:1376.3999999999999px;top:543.5px;" width="11" height="6.5" viewBox="0 0 11 6.5"><polygon points="0,0 11,0 5.5,6.5" fill="#666"/></svg>
<svg style="position:absolute;left:1594.2px;top:515.5px;" width="16.0" height="16.0" viewBox="0 0 16.0 16.0"><g transform="scale(1.0,1.0)"><path d="M8.4,11.6 C3.6,11.4 0.7,9.1 0.7,6.2 C0.7,3.1 3.8,0.8 8,0.8 C12.2,0.8 15.3,3.1 15.3,6.2 C15.3,7.9 14.3,9.3 12.9,10.3 L9.3,14.8 Z" fill="none" stroke="#8a8a8a" stroke-width="1.15" stroke-linejoin="round"/><g stroke="#8a8a8a" stroke-width="1.25"><line x1="4.8" y1="4.1" x2="11.3" y2="4.1"/><line x1="4.8" y1="6.4" x2="11.3" y2="6.4"/><line x1="4.8" y1="8.5" x2="11.3" y2="8.5"/></g></g></svg>
<div style="position:absolute;left:1515.2px;top:541.7px;width:25.2px;height:7.2px;background:#4b80c0;"></div>
<svg style="position:absolute;left:1553.0px;top:543.5px;" width="11" height="6.5" viewBox="0 0 11 6.5"><polygon points="0,0 11,0 5.5,6.5" fill="#666"/></svg>
<div style="position:absolute;left:334px;top:591px;width:1296px;height:92px;background:#f9f9f9;"></div>
<div style="position:absolute;left:333px;top:590px;width:1297px;height:2px;background:#e0e0e0;"></div>
<div style="position:absolute;left:333px;top:636px;width:767px;height:1px;background:#e6e6e6;"></div>
<div style="position:absolute;left:1100px;top:591px;width:1px;height:92px;background:#e3e3e3;"></div>
<div style="position:absolute;left:1276px;top:591px;width:1px;height:92px;background:#e3e3e3;"></div>
<div style="position:absolute;left:1452px;top:591px;width:1px;height:92px;background:#e3e3e3;"></div>
<div class="t" style="top:607.15px;font-size:14px;font-weight:700;color:#1e1e1e;right:1529.5px;">5</div>
<div class="t" style="top:606.30px;font-size:15px;font-weight:400;color:#222;left:402.4px;transform:scaleX(0.97);transform-origin:0 0;">RIB Test - Selenium 005</div>
<svg style="position:absolute;left:969.5px;top:603px;" width="22" height="16" viewBox="0 0 22 16"><g stroke="#111" stroke-width="1.7" stroke-linecap="round"><line x1="4.6" y1="1" x2="4.6" y2="15"/><line x1="8.8" y1="1" x2="8.8" y2="15"/><line x1="13" y1="1" x2="13" y2="15"/><line x1="17.4" y1="1" x2="17.4" y2="15"/><path d="M1.2,10.6 Q3,9.6 10,8 Q17,6.2 19.6,4.8" fill="none"/></g></svg>
<div class="t" style="top:650.70px;font-size:15px;font-weight:400;color:#222;left:402.4px;transform:scaleX(0.97);transform-origin:0 0;">Nein</div>
<div class="t" style="top:650.70px;font-size:15px;font-weight:400;color:#222;right:1175.6px;transform:scaleX(0.93);transform-origin:100% 0;">3,80</div>
<div class="t" style="top:650.70px;font-size:15px;font-weight:400;color:#222;right:999.6px;transform:scaleX(0.955);transform-origin:100% 0;">19.392,12</div>
<div style="position:absolute;left:946px;top:641px;width:145.5px;height:35.5px;background:#f3f3f3;border-radius:2px;"></div>
<div class="t" style="top:650.70px;font-size:15px;font-weight:400;color:#222;right:832.4000000000001px;transform:scaleX(0.93);transform-origin:100% 0;">0,00</div>
<svg style="position:absolute;left:1241px;top:606.5px;" width="16.0" height="16.0" viewBox="0 0 16.0 16.0"><g transform="scale(1.0,1.0)"><path d="M8.4,11.6 C3.6,11.4 0.7,9.1 0.7,6.2 C0.7,3.1 3.8,0.8 8,0.8 C12.2,0.8 15.3,3.1 15.3,6.2 C15.3,7.9 14.3,9.3 12.9,10.3 L9.3,14.8 Z" fill="none" stroke="#8a8a8a" stroke-width="1.15" stroke-linejoin="round"/><g stroke="#8a8a8a" stroke-width="1.25"><line x1="4.8" y1="4.1" x2="11.3" y2="4.1"/><line x1="4.8" y1="6.4" x2="11.3" y2="6.4"/><line x1="4.8" y1="8.5" x2="11.3" y2="8.5"/></g></g></svg>
<div style="position:absolute;left:1162px;top:632.7px;width:25.2px;height:7.2px;background:#4b80c0;"></div>
<svg style="position:absolute;left:1199.8px;top:634.5px;" width="11" height="6.5" viewBox="0 0 11 6.5"><polygon points="0,0 11,0 5.5,6.5" fill="#666"/></svg>
<svg style="position:absolute;left:1417.6px;top:606.5px;" width="16.0" height="16.0" viewBox="0 0 16.0 16.0"><g transform="scale(1.0,1.0)"><path d="M8.4,11.6 C3.6,11.4 0.7,9.1 0.7,6.2 C0.7,3.1 3.8,0.8 8,0.8 C12.2,0.8 15.3,3.1 15.3,6.2 C15.3,7.9 14.3,9.3 12.9,10.3 L9.3,14.8 Z" fill="none" stroke="#8a8a8a" stroke-width="1.15" stroke-linejoin="round"/><g stroke="#8a8a8a" stroke-width="1.25"><line x1="4.8" y1="4.1" x2="11.3" y2="4.1"/><line x1="4.8" y1="6.4" x2="11.3" y2="6.4"/><line x1="4.8" y1="8.5" x2="11.3" y2="8.5"/></g></g></svg>
<div style="position:absolute;left:1338.6px;top:632.7px;width:25.2px;height:7.2px;background:#4b80c0;"></div>
<svg style="position:absolute;left:1376.3999999999999px;top:634.5px;" width="11" height="6.5" viewBox="0 0 11 6.5"><polygon points="0,0 11,0 5.5,6.5" fill="#666"/></svg>
<svg style="position:absolute;left:1594.2px;top:606.5px;" width="16.0" height="16.0" viewBox="0 0 16.0 16.0"><g transform="scale(1.0,1.0)"><path d="M8.4,11.6 C3.6,11.4 0.7,9.1 0.7,6.2 C0.7,3.1 3.8,0.8 8,0.8 C12.2,0.8 15.3,3.1 15.3,6.2 C15.3,7.9 14.3,9.3 12.9,10.3 L9.3,14.8 Z" fill="none" stroke="#8a8a8a" stroke-width="1.15" stroke-linejoin="round"/><g stroke="#8a8a8a" stroke-width="1.25"><line x1="4.8" y1="4.1" x2="11.3" y2="4.1"/><line x1="4.8" y1="6.4" x2="11.3" y2="6.4"/><line x1="4.8" y1="8.5" x2="11.3" y2="8.5"/></g></g></svg>
<div style="position:absolute;left:1515.2px;top:632.7px;width:25.2px;height:7.2px;background:#4b80c0;"></div>
<svg style="position:absolute;left:1553.0px;top:634.5px;" width="11" height="6.5" viewBox="0 0 11 6.5"><polygon points="0,0 11,0 5.5,6.5" fill="#666"/></svg>
<div style="position:absolute;left:334px;top:683px;width:1296px;height:91px;background:#ffffff;"></div>
<div style="position:absolute;left:333px;top:682px;width:1297px;height:2px;background:#e0e0e0;"></div>
<div style="position:absolute;left:333px;top:728px;width:767px;height:1px;background:#e6e6e6;"></div>
<div style="position:absolute;left:1100px;top:683px;width:1px;height:91px;background:#e3e3e3;"></div>
<div style="position:absolute;left:1276px;top:683px;width:1px;height:91px;background:#e3e3e3;"></div>
<div style="position:absolute;left:1452px;top:683px;width:1px;height:91px;background:#e3e3e3;"></div>
<div class="t" style="top:699.15px;font-size:14px;font-weight:700;color:#1e1e1e;right:1529.5px;">6</div>
<div class="t" style="top:698.30px;font-size:15px;font-weight:400;color:#222;left:402.4px;transform:scaleX(0.97);transform-origin:0 0;">RIB Test - Selenium 006</div>
<div class="t" style="top:742.70px;font-size:15px;font-weight:400;color:#222;left:402.4px;transform:scaleX(0.97);transform-origin:0 0;">Nein</div>
<div class="t" style="top:742.70px;font-size:15px;font-weight:400;color:#222;right:1175.6px;transform:scaleX(0.93);transform-origin:100% 0;">9,30</div>
<div class="t" style="top:742.70px;font-size:15px;font-weight:400;color:#222;right:999.6px;transform:scaleX(0.955);transform-origin:100% 0;">14.045,26</div>
<div style="position:absolute;left:946px;top:733px;width:145.5px;height:35.5px;background:#f3f3f3;border-radius:2px;"></div>
<div class="t" style="top:742.70px;font-size:15px;font-weight:400;color:#222;right:832.4000000000001px;transform:scaleX(0.93);transform-origin:100% 0;">0,00</div>
<svg style="position:absolute;left:1241px;top:698.5px;" width="16.0" height="16.0" viewBox="0 0 16.0 16.0"><g transform="scale(1.0,1.0)"><path d="M8.4,11.6 C3.6,11.4 0.7,9.1 0.7,6.2 C0.7,3.1 3.8,0.8 8,0.8 C12.2,0.8 15.3,3.1 15.3,6.2 C15.3,7.9 14.3,9.3 12.9,10.3 L9.3,14.8 Z" fill="none" stroke="#8a8a8a" stroke-width="1.15" stroke-linejoin="round"/><g stroke="#8a8a8a" stroke-width="1.25"><line x1="4.8" y1="4.1" x2="11.3" y2="4.1"/><line x1="4.8" y1="6.4" x2="11.3" y2="6.4"/><line x1="4.8" y1="8.5" x2="11.3" y2="8.5"/></g></g></svg>
<div style="position:absolute;left:1162px;top:724.7px;width:25.2px;height:7.2px;background:#4b80c0;"></div>
<svg style="position:absolute;left:1199.8px;top:726.5px;" width="11" height="6.5" viewBox="0 0 11 6.5"><polygon points="0,0 11,0 5.5,6.5" fill="#666"/></svg>
<svg style="position:absolute;left:1417.6px;top:698.5px;" width="16.0" height="16.0" viewBox="0 0 16.0 16.0"><g transform="scale(1.0,1.0)"><path d="M8.4,11.6 C3.6,11.4 0.7,9.1 0.7,6.2 C0.7,3.1 3.8,0.8 8,0.8 C12.2,0.8 15.3,3.1 15.3,6.2 C15.3,7.9 14.3,9.3 12.9,10.3 L9.3,14.8 Z" fill="none" stroke="#8a8a8a" stroke-width="1.15" stroke-linejoin="round"/><g stroke="#8a8a8a" stroke-width="1.25"><line x1="4.8" y1="4.1" x2="11.3" y2="4.1"/><line x1="4.8" y1="6.4" x2="11.3" y2="6.4"/><line x1="4.8" y1="8.5" x2="11.3" y2="8.5"/></g></g></svg>
<div style="position:absolute;left:1338.6px;top:724.7px;width:25.2px;height:7.2px;background:#4b80c0;"></div>
<svg style="position:absolute;left:1376.3999999999999px;top:726.5px;" width="11" height="6.5" viewBox="0 0 11 6.5"><polygon points="0,0 11,0 5.5,6.5" fill="#666"/></svg>
<svg style="position:absolute;left:1594.2px;top:698.5px;" width="16.0" height="16.0" viewBox="0 0 16.0 16.0"><g transform="scale(1.0,1.0)"><path d="M8.4,11.6 C3.6,11.4 0.7,9.1 0.7,6.2 C0.7,3.1 3.8,0.8 8,0.8 C12.2,0.8 15.3,3.1 15.3,6.2 C15.3,7.9 14.3,9.3 12.9,10.3 L9.3,14.8 Z" fill="none" stroke="#8a8a8a" stroke-width="1.15" stroke-linejoin="round"/><g stroke="#8a8a8a" stroke-width="1.25"><line x1="4.8" y1="4.1" x2="11.3" y2="4.1"/><line x1="4.8" y1="6.4" x2="11.3" y2="6.4"/><line x1="4.8" y1="8.5" x2="11.3" y2="8.5"/></g></g></svg>
<div style="position:absolute;left:1515.2px;top:724.7px;width:25.2px;height:7.2px;background:#4b80c0;"></div>
<svg style="position:absolute;left:1553.0px;top:726.5px;" width="11" height="6.5" viewBox="0 0 11 6.5"><polygon points="0,0 11,0 5.5,6.5" fill="#666"/></svg>
<div style="position:absolute;left:334px;top:774px;width:1296px;height:91px;background:#f9f9f9;"></div>
<div style="position:absolute;left:333px;top:773px;width:1297px;height:2px;background:#e0e0e0;"></div>
<div style="position:absolute;left:333px;top:819px;width:767px;height:1px;background:#e6e6e6;"></div>
<div style="position:absolute;left:1100px;top:774px;width:1px;height:91px;background:#e3e3e3;"></div>
<div style="position:absolute;left:1276px;top:774px;width:1px;height:91px;background:#e3e3e3;"></div>
<div style="position:absolute;left:1452px;top:774px;width:1px;height:91px;background:#e3e3e3;"></div>
<div class="t" style="top:790.15px;font-size:14px;font-weight:700;color:#1e1e1e;right:1529.5px;">7</div>
<div class="t" style="top:789.30px;font-size:15px;font-weight:400;color:#222;left:402.4px;transform:scaleX(0.97);transform-origin:0 0;">RIB Test - Selenium 007</div>
<div class="t" style="top:833.70px;font-size:15px;font-weight:400;color:#222;left:402.4px;transform:scaleX(0.97);transform-origin:0 0;">Nein</div>
<div class="t" style="top:833.70px;font-size:15px;font-weight:400;color:#222;right:1175.6px;transform:scaleX(0.93);transform-origin:100% 0;">2,80</div>
<div class="t" style="top:833.70px;font-size:15px;font-weight:400;color:#222;right:999.6px;transform:scaleX(0.955);transform-origin:100% 0;">24.924,23</div>
<div style="position:absolute;left:946px;top:824px;width:145.5px;height:35.5px;background:#f3f3f3;border-radius:2px;"></div>
<div class="t" style="top:833.70px;font-size:15px;font-weight:400;color:#222;right:832.4000000000001px;transform:scaleX(0.93);transform-origin:100% 0;">0,00</div>
<svg style="position:absolute;left:1241px;top:789.5px;" width="16.0" height="16.0" viewBox="0 0 16.0 16.0"><g transform="scale(1.0,1.0)"><path d="M8.4,11.6 C3.6,11.4 0.7,9.1 0.7,6.2 C0.7,3.1 3.8,0.8 8,0.8 C12.2,0.8 15.3,3.1 15.3,6.2 C15.3,7.9 14.3,9.3 12.9,10.3 L9.3,14.8 Z" fill="none" stroke="#8a8a8a" stroke-width="1.15" stroke-linejoin="round"/><g stroke="#8a8a8a" stroke-width="1.25"><line x1="4.8" y1="4.1" x2="11.3" y2="4.1"/><line x1="4.8" y1="6.4" x2="11.3" y2="6.4"/><line x1="4.8" y1="8.5" x2="11.3" y2="8.5"/></g></g></svg>
<div style="position:absolute;left:1162px;top:815.7px;width:25.2px;height:7.2px;background:#4b80c0;"></div>
<svg style="position:absolute;left:1199.8px;top:817.5px;" width="11" height="6.5" viewBox="0 0 11 6.5"><polygon points="0,0 11,0 5.5,6.5" fill="#666"/></svg>
<svg style="position:absolute;left:1417.6px;top:789.5px;" width="16.0" height="16.0" viewBox="0 0 16.0 16.0"><g transform="scale(1.0,1.0)"><path d="M8.4,11.6 C3.6,11.4 0.7,9.1 0.7,6.2 C0.7,3.1 3.8,0.8 8,0.8 C12.2,0.8 15.3,3.1 15.3,6.2 C15.3,7.9 14.3,9.3 12.9,10.3 L9.3,14.8 Z" fill="none" stroke="#8a8a8a" stroke-width="1.15" stroke-linejoin="round"/><g stroke="#8a8a8a" stroke-width="1.25"><line x1="4.8" y1="4.1" x2="11.3" y2="4.1"/><line x1="4.8" y1="6.4" x2="11.3" y2="6.4"/><line x1="4.8" y1="8.5" x2="11.3" y2="8.5"/></g></g></svg>
<div style="position:absolute;left:1338.6px;top:815.7px;width:25.2px;height:7.2px;background:#4b80c0;"></div>
<svg style="position:absolute;left:1376.3999999999999px;top:817.5px;" width="11" height="6.5" viewBox="0 0 11 6.5"><polygon points="0,0 11,0 5.5,6.5" fill="#666"/></svg>
<svg style="position:absolute;left:1594.2px;top:789.5px;" width="16.0" height="16.0" viewBox="0 0 16.0 16.0"><g transform="scale(1.0,1.0)"><path d="M8.4,11.6 C3.6,11.4 0.7,9.1 0.7,6.2 C0.7,3.1 3.8,0.8 8,0.8 C12.2,0.8 15.3,3.1 15.3,6.2 C15.3,7.9 14.3,9.3 12.9,10.3 L9.3,14.8 Z" fill="none" stroke="#8a8a8a" stroke-width="1.15" stroke-linejoin="round"/><g stroke="#8a8a8a" stroke-width="1.25"><line x1="4.8" y1="4.1" x2="11.3" y2="4.1"/><line x1="4.8" y1="6.4" x2="11.3" y2="6.4"/><line x1="4.8" y1="8.5" x2="11.3" y2="8.5"/></g></g></svg>
<div style="position:absolute;left:1515.2px;top:815.7px;width:25.2px;height:7.2px;background:#4b80c0;"></div>
<svg style="position:absolute;left:1553.0px;top:817.5px;" width="11" height="6.5" viewBox="0 0 11 6.5"><polygon points="0,0 11,0 5.5,6.5" fill="#666"/></svg>
<div style="position:absolute;left:334px;top:865px;width:1296px;height:92px;background:#ffffff;"></div>
<div style="position:absolute;left:333px;top:864px;width:1297px;height:2px;background:#e0e0e0;"></div>
<div style="position:absolute;left:333px;top:910px;width:767px;height:1px;background:#e6e6e6;"></div>
<div style="position:absolute;left:1100px;top:865px;width:1px;height:92px;background:#e3e3e3;"></div>
<div style="position:absolute;left:1276px;top:865px;width:1px;height:92px;background:#e3e3e3;"></div>
<div style="position:absolute;left:1452px;top:865px;width:1px;height:92px;background:#e3e3e3;"></div>
<div class="t" style="top:881.15px;font-size:14px;font-weight:700;color:#1e1e1e;right:1529.5px;">8</div>
<div class="t" style="top:880.30px;font-size:15px;font-weight:400;color:#222;left:402.4px;transform:scaleX(0.97);transform-origin:0 0;">RIB Test - Selenium 008</div>
<svg style="position:absolute;left:969.5px;top:877px;" width="22" height="16" viewBox="0 0 22 16"><g stroke="#111" stroke-width="1.7" stroke-linecap="round"><line x1="4.6" y1="1" x2="4.6" y2="15"/><line x1="8.8" y1="1" x2="8.8" y2="15"/><line x1="13" y1="1" x2="13" y2="15"/><line x1="17.4" y1="1" x2="17.4" y2="15"/><path d="M1.2,10.6 Q3,9.6 10,8 Q17,6.2 19.6,4.8" fill="none"/></g></svg>
<div class="t" style="top:924.70px;font-size:15px;font-weight:400;color:#222;left:402.4px;transform:scaleX(0.97);transform-origin:0 0;">Nein</div>
<div class="t" style="top:924.70px;font-size:15px;font-weight:400;color:#222;right:1175.6px;transform:scaleX(0.93);transform-origin:100% 0;">9,10</div>
<div class="t" style="top:924.70px;font-size:15px;font-weight:400;color:#222;right:999.6px;transform:scaleX(0.955);transform-origin:100% 0;">13.611,31</div>
<div style="position:absolute;left:946px;top:915px;width:145.5px;height:35.5px;background:#f3f3f3;border-radius:2px;"></div>
<div class="t" style="top:924.70px;font-size:15px;font-weight:400;color:#222;right:832.4000000000001px;transform:scaleX(0.93);transform-origin:100% 0;">0,00</div>
<svg style="position:absolute;left:1241px;top:880.5px;" width="16.0" height="16.0" viewBox="0 0 16.0 16.0"><g transform="scale(1.0,1.0)"><path d="M8.4,11.6 C3.6,11.4 0.7,9.1 0.7,6.2 C0.7,3.1 3.8,0.8 8,0.8 C12.2,0.8 15.3,3.1 15.3,6.2 C15.3,7.9 14.3,9.3 12.9,10.3 L9.3,14.8 Z" fill="none" stroke="#8a8a8a" stroke-width="1.15" stroke-linejoin="round"/><g stroke="#8a8a8a" stroke-width="1.25"><line x1="4.8" y1="4.1" x2="11.3" y2="4.1"/><line x1="4.8" y1="6.4" x2="11.3" y2="6.4"/><line x1="4.8" y1="8.5" x2="11.3" y2="8.5"/></g></g></svg>
<div style="position:absolute;left:1162px;top:906.7px;width:25.2px;height:7.2px;background:#4b80c0;"></div>
<svg style="position:absolute;left:1199.8px;top:908.5px;" width="11" height="6.5" viewBox="0 0 11 6.5"><polygon points="0,0 11,0 5.5,6.5" fill="#666"/></svg>
<svg style="position:absolute;left:1417.6px;top:880.5px;" width="16.0" height="16.0" viewBox="0 0 16.0 16.0"><g transform="scale(1.0,1.0)"><path d="M8.4,11.6 C3.6,11.4 0.7,9.1 0.7,6.2 C0.7,3.1 3.8,0.8 8,0.8 C12.2,0.8 15.3,3.1 15.3,6.2 C15.3,7.9 14.3,9.3 12.9,10.3 L9.3,14.8 Z" fill="none" stroke="#8a8a8a" stroke-width="1.15" stroke-linejoin="round"/><g stroke="#8a8a8a" stroke-width="1.25"><line x1="4.8" y1="4.1" x2="11.3" y2="4.1"/><line x1="4.8" y1="6.4" x2="11.3" y2="6.4"/><line x1="4.8" y1="8.5" x2="11.3" y2="8.5"/></g></g></svg>
<div style="position:absolute;left:1338.6px;top:906.7px;width:25.2px;height:7.2px;background:#4b80c0;"></div>
<svg style="position:absolute;left:1376.3999999999999px;top:908.5px;" width="11" height="6.5" viewBox="0 0 11 6.5"><polygon points="0,0 11,0 5.5,6.5" fill="#666"/></svg>
<svg style="position:absolute;left:1594.2px;top:880.5px;" width="16.0" height="16.0" viewBox="0 0 16.0 16.0"><g transform="scale(1.0,1.0)"><path d="M8.4,11.6 C3.6,11.4 0.7,9.1 0.7,6.2 C0.7,3.1 3.8,0.8 8,0.8 C12.2,0.8 15.3,3.1 15.3,6.2 C15.3,7.9 14.3,9.3 12.9,10.3 L9.3,14.8 Z" fill="none" stroke="#8a8a8a" stroke-width="1.15" stroke-linejoin="round"/><g stroke="#8a8a8a" stroke-width="1.25"><line x1="4.8" y1="4.1" x2="11.3" y2="4.1"/><line x1="4.8" y1="6.4" x2="11.3" y2="6.4"/><line x1="4.8" y1="8.5" x2="11.3" y2="8.5"/></g></g></svg>
<div style="position:absolute;left:1515.2px;top:906.7px;width:25.2px;height:7.2px;background:#4b80c0;"></div>
<svg style="position:absolute;left:1553.0px;top:908.5px;" width="11" height="6.5" viewBox="0 0 11 6.5"><polygon points="0,0 11,0 5.5,6.5" fill="#666"/></svg>
<div style="position:absolute;left:334px;top:957px;width:1296px;height:43px;background:#f9f9f9;"></div>
<div style="position:absolute;left:333px;top:956px;width:1297px;height:2px;background:#e0e0e0;"></div>
<div style="position:absolute;left:333px;top:1002px;width:767px;height:1px;background:#e6e6e6;"></div>
<div style="position:absolute;left:1100px;top:957px;width:1px;height:43px;background:#e3e3e3;"></div>
<div style="position:absolute;left:1276px;top:957px;width:1px;height:43px;background:#e3e3e3;"></div>
<div style="position:absolute;left:1452px;top:957px;width:1px;height:43px;background:#e3e3e3;"></div>
<div class="t" style="top:973.15px;font-size:14px;font-weight:700;color:#1e1e1e;right:1529.5px;">9</div>
<div class="t" style="top:972.30px;font-size:15px;font-weight:400;color:#222;left:402.4px;transform:scaleX(0.97);transform-origin:0 0;">RIB Test - Selenium 009</div>
<svg style="position:absolute;left:969.5px;top:969px;" width="22" height="16" viewBox="0 0 22 16"><g stroke="#111" stroke-width="1.7" stroke-linecap="round"><line x1="4.6" y1="1" x2="4.6" y2="15"/><line x1="8.8" y1="1" x2="8.8" y2="15"/><line x1="13" y1="1" x2="13" y2="15"/><line x1="17.4" y1="1" x2="17.4" y2="15"/><path d="M1.2,10.6 Q3,9.6 10,8 Q17,6.2 19.6,4.8" fill="none"/></g></svg>
<svg style="position:absolute;left:1241px;top:972.5px;" width="16.0" height="16.0" viewBox="0 0 16.0 16.0"><g transform="scale(1.0,1.0)"><path d="M8.4,11.6 C3.6,11.4 0.7,9.1 0.7,6.2 C0.7,3.1 3.8,0.8 8,0.8 C12.2,0.8 15.3,3.1 15.3,6.2 C15.3,7.9 14.3,9.3 12.9,10.3 L9.3,14.8 Z" fill="none" stroke="#8a8a8a" stroke-width="1.15" stroke-linejoin="round"/><g stroke="#8a8a8a" stroke-width="1.25"><line x1="4.8" y1="4.1" x2="11.3" y2="4.1"/><line x1="4.8" y1="6.4" x2="11.3" y2="6.4"/><line x1="4.8" y1="8.5" x2="11.3" y2="8.5"/></g></g></svg>
<div style="position:absolute;left:1162px;top:998.7px;width:25.2px;height:7.2px;background:#4b80c0;"></div>
<svg style="position:absolute;left:1199.8px;top:1000.5px;" width="11" height="6.5" viewBox="0 0 11 6.5"><polygon points="0,0 11,0 5.5,6.5" fill="#666"/></svg>
<svg style="position:absolute;left:1417.6px;top:972.5px;" width="16.0" height="16.0" viewBox="0 0 16.0 16.0"><g transform="scale(1.0,1.0)"><path d="M8.4,11.6 C3.6,11.4 0.7,9.1 0.7,6.2 C0.7,3.1 3.8,0.8 8,0.8 C12.2,0.8 15.3,3.1 15.3,6.2 C15.3,7.9 14.3,9.3 12.9,10.3 L9.3,14.8 Z" fill="none" stroke="#8a8a8a" stroke-width="1.15" stroke-linejoin="round"/><g stroke="#8a8a8a" stroke-width="1.25"><line x1="4.8" y1="4.1" x2="11.3" y2="4.1"/><line x1="4.8" y1="6.4" x2="11.3" y2="6.4"/><line x1="4.8" y1="8.5" x2="11.3" y2="8.5"/></g></g></svg>
<div style="position:absolute;left:1338.6px;top:998.7px;width:25.2px;height:7.2px;background:#4b80c0;"></div>
<svg style="position:absolute;left:1376.3999999999999px;top:1000.5px;" width="11" height="6.5" viewBox="0 0 11 6.5"><polygon points="0,0 11,0 5.5,6.5" fill="#666"/></svg>
<svg style="position:absolute;left:1594.2px;top:972.5px;" width="16.0" height="16.0" viewBox="0 0 16.0 16.0"><g transform="scale(1.0,1.0)"><path d="M8.4,11.6 C3.6,11.4 0.7,9.1 0.7,6.2 C0.7,3.1 3.8,0.8 8,0.8 C12.2,0.8 15.3,3.1 15.3,6.2 C15.3,7.9 14.3,9.3 12.9,10.3 L9.3,14.8 Z" fill="none" stroke="#8a8a8a" stroke-width="1.15" stroke-linejoin="round"/><g stroke="#8a8a8a" stroke-width="1.25"><line x1="4.8" y1="4.1" x2="11.3" y2="4.1"/><line x1="4.8" y1="6.4" x2="11.3" y2="6.4"/><line x1="4.8" y1="8.5" x2="11.3" y2="8.5"/></g></g></svg>
<div style="position:absolute;left:1515.2px;top:998.7px;width:25.2px;height:7.2px;background:#4b80c0;"></div>
<svg style="position:absolute;left:1553.0px;top:1000.5px;" width="11" height="6.5" viewBox="0 0 11 6.5"><polygon points="0,0 11,0 5.5,6.5" fill="#666"/></svg>
<div style="position:absolute;left:332px;top:226px;width:2px;height:91px;background:#3a9fe2;"></div>
<div style="position:absolute;left:329px;top:594px;width:2px;height:2px;background:#8a8a8a;border-radius:1px;"></div>
<div style="position:absolute;left:329px;top:598.5px;width:2px;height:2px;background:#8a8a8a;border-radius:1px;"></div>
<div style="position:absolute;left:329px;top:603px;width:2px;height:2px;background:#8a8a8a;border-radius:1px;"></div>
<div style="position:absolute;left:106px;top:102px;width:223px;height:37px;background:#e9e9e9;"></div>
<div class="t" style="top:110.10px;font-size:15px;font-weight:400;color:#1e1e1e;left:135px;transform:scaleX(0.988);transform-origin:0 0;">Lose zur Ausschreibun</div>
<svg style="position:absolute;left:300px;top:112.5px;" width="11" height="15" viewBox="0 0 11 15"><polyline points="8.4,1.6 2.4,7.4 8.4,13.2" fill="none" stroke="#444" stroke-width="2.2" stroke-linecap="round"/></svg>
<div style="position:absolute;left:107px;top:139px;width:219px;height:64px;border:1px dotted #b4b4b4;box-sizing:border-box;border-right:none;"></div>
<div style="position:absolute;left:326px;top:139px;width:2px;height:64px;background:#3a9fe2;"></div>
<div class="t" style="top:156.20px;font-size:15px;font-weight:400;color:#3f9fe2;left:131.4px;-webkit-text-stroke:0.45px #3f9fe2;transform:scaleX(0.8925);transform-origin:0 0;">LOS 1 FLIESENLEGERAR...</div>
<div class="t" style="top:174.42px;font-size:11.2px;font-weight:400;color:#46892a;left:214.5px;">in Bearbeitung</div>
<div style="position:absolute;left:305px;top:146px;width:14px;height:14px;border:1px solid #3a9fe2;border-radius:50%;"></div>
<div class="t" style="top:148.71px;font-size:10.5px;font-weight:400;color:#2f8fd4;left:313px;transform:translateX(-50%);">9</div>
<div class="t" style="top:218.30px;font-size:15px;font-weight:400;color:#6db7ea;left:132.3px;-webkit-text-stroke:0.45px #6db7ea;transform:scaleX(0.9234);transform-origin:0 0;">LOS 2 AUSSENANLAGE</div>
<div class="t" style="top:237.72px;font-size:11.2px;font-weight:400;color:#46892a;left:216px;">in Bearbeitung</div>
<div style="position:absolute;left:307px;top:208.5px;width:14px;height:14px;border:1px solid #3a9fe2;border-radius:50%;"></div>
<div class="t" style="top:211.21px;font-size:10.5px;font-weight:400;color:#2f8fd4;left:315px;transform:translateX(-50%);">9</div>
<div style="position:absolute;left:108px;top:265px;width:220px;height:1px;background:#e6e6e6;"></div>
<div class="t" style="top:281.60px;font-size:15px;font-weight:400;color:#6db7ea;left:132.3px;-webkit-text-stroke:0.45px #6db7ea;transform:scaleX(0.9038);transform-origin:0 0;">LOS 3 FENSTEREINBAU ...</div>
<div class="t" style="top:301.02px;font-size:11.2px;font-weight:400;color:#46892a;left:216px;">in Bearbeitung</div>
<div style="position:absolute;left:307px;top:271.8px;width:14px;height:14px;border:1px solid #3a9fe2;border-radius:50%;"></div>
<div class="t" style="top:274.93px;font-size:10px;font-weight:400;color:#2f8fd4;letter-spacing:-0.8px;left:315px;transform:translateX(-50%);">10</div>
<div style="position:absolute;left:108px;top:328px;width:220px;height:1px;background:#e6e6e6;"></div>
<div class="t" style="top:344.90px;font-size:15px;font-weight:400;color:#6db7ea;left:132.3px;-webkit-text-stroke:0.45px #6db7ea;transform:scaleX(0.8981);transform-origin:0 0;">LOS 4 AUSBESSERUNGS...</div>
<div class="t" style="top:364.32px;font-size:11.2px;font-weight:400;color:#46892a;left:216px;">in Bearbeitung</div>
<div style="position:absolute;left:307px;top:335.09999999999997px;width:14px;height:14px;border:1px solid #3a9fe2;border-radius:50%;"></div>
<div class="t" style="top:338.23px;font-size:10px;font-weight:400;color:#2f8fd4;letter-spacing:-0.8px;left:315px;transform:translateX(-50%);">10</div>
<div style="position:absolute;left:108px;top:392px;width:220px;height:1px;background:#e6e6e6;"></div>
<div class="t" style="top:408.20px;font-size:15px;font-weight:400;color:#6db7ea;left:132.3px;-webkit-text-stroke:0.45px #6db7ea;transform:scaleX(0.9154);transform-origin:0 0;">LOS 5 ABWASSERSANIE...</div>
<div class="t" style="top:427.62px;font-size:11.2px;font-weight:400;color:#46892a;left:216px;">in Bearbeitung</div>
<div style="position:absolute;left:307px;top:398.4px;width:14px;height:14px;border:1px solid #3a9fe2;border-radius:50%;"></div>
<div class="t" style="top:401.53px;font-size:10px;font-weight:400;color:#2f8fd4;letter-spacing:-0.8px;left:315px;transform:translateX(-50%);">10</div>
<div style="position:absolute;left:108px;top:455px;width:220px;height:1px;background:#e6e6e6;"></div>
<div style="position:absolute;left:84px;top:85px;width:259px;height:388px;box-sizing:border-box;border:3px solid #fd3c3c;box-shadow:inset 0 4px 5px rgba(0,0,0,0.34), 1px 3px 5px rgba(0,0,0,0.3);"></div>
<div style="position:absolute;left:1642px;top:93px;width:1px;height:900px;background:#e8e8e8;"></div>
<div style="position:absolute;left:1653px;top:93px;width:232px;height:22.6px;background:#02569f;"></div>
<div class="t" style="top:98.67px;font-size:12.2px;font-weight:700;color:#fff;right:39.5px;">Status des Loses 1</div>
<div style="position:absolute;left:1660.4px;top:122px;width:219px;height:35.7px;background:#f5f5f5;border:1px solid #dcdcdc;border-radius:2px;box-sizing:border-box;"></div>
<div class="t" style="top:132.82px;font-size:14.5px;font-weight:400;color:#1e1e1e;left:1669.6px;">in Bearbeitung</div>
<svg style="position:absolute;left:1857.8px;top:138.3px;" width="10.5" height="5.5" viewBox="0 0 10.5 5.5"><polygon points="0,0 10.5,0 5.25,5.5" fill="#111"/></svg>
<div style="position:absolute;left:1659px;top:172px;width:212.5px;height:1px;background:#a8a8a8;"></div>
<svg style="position:absolute;left:1662px;top:200.9px;" width="12" height="13" viewBox="0 0 12 13"><path d="M0.9,4.2 Q0.9,0.9 4.2,0.9 L6.8,0.9 Q10.1,0.9 10.1,4.2 L10.1,7.2 Q10.1,11.9 5.5,11.9 Q0.9,11.9 0.9,7.2 Z" fill="#fff" stroke="#959595" stroke-width="1.15"/><line x1="1" y1="4.9" x2="10" y2="4.9" stroke="#a0a0a0" stroke-width="1"/><line x1="5.5" y1="1" x2="5.5" y2="4.9" stroke="#b0b0b0" stroke-width="0.9"/><rect x="1.9" y="1.9" width="2.7" height="2.3" fill="#f79b4a"/></svg>
<div class="t" style="top:201.17px;font-size:13.5px;font-weight:400;color:#1e1e1e;left:1683px;">mehrere Lose ändern</div>
<svg style="position:absolute;left:1662px;top:225.8px;" width="12" height="13" viewBox="0 0 12 13"><path d="M0.9,4.2 Q0.9,0.9 4.2,0.9 L6.8,0.9 Q10.1,0.9 10.1,4.2 L10.1,7.2 Q10.1,11.9 5.5,11.9 Q0.9,11.9 0.9,7.2 Z" fill="#fff" stroke="#959595" stroke-width="1.15"/><line x1="1" y1="4.9" x2="10" y2="4.9" stroke="#a0a0a0" stroke-width="1"/><line x1="5.5" y1="1" x2="5.5" y2="4.9" stroke="#b0b0b0" stroke-width="0.9"/><rect x="1.9" y="1.9" width="2.7" height="2.3" fill="#f79b4a"/></svg>
<div class="t" style="top:226.07px;font-size:13.5px;font-weight:400;color:#1e1e1e;left:1683px;">Übersicht erteilter Freigaben</div>
<div style="position:absolute;left:1653px;top:264px;width:232px;height:22.6px;background:#02569f;"></div>
<div class="t" style="top:269.67px;font-size:12.2px;font-weight:700;color:#fff;right:39.5px;">Aktionen</div>
<svg style="position:absolute;left:1662px;top:295.0px;" width="12" height="13" viewBox="0 0 12 13"><path d="M0.9,4.2 Q0.9,0.9 4.2,0.9 L6.8,0.9 Q10.1,0.9 10.1,4.2 L10.1,7.2 Q10.1,11.9 5.5,11.9 Q0.9,11.9 0.9,7.2 Z" fill="#fff" stroke="#959595" stroke-width="1.15"/><line x1="1" y1="4.9" x2="10" y2="4.9" stroke="#a0a0a0" stroke-width="1"/><line x1="5.5" y1="1" x2="5.5" y2="4.9" stroke="#b0b0b0" stroke-width="0.9"/><rect x="1.9" y="1.9" width="2.7" height="2.3" fill="#f79b4a"/></svg>
<div class="t" style="top:295.27px;font-size:13.5px;font-weight:400;color:#1e1e1e;left:1683px;">Seitenaktivitäten</div>
<div style="position:absolute;left:1653px;top:333px;width:232px;height:22.6px;background:#02569f;"></div>
<div class="t" style="top:338.67px;font-size:12.2px;font-weight:700;color:#fff;right:39.5px;">Ausschreibung</div>
<svg style="position:absolute;left:1662px;top:364.0px;" width="12" height="13" viewBox="0 0 12 13"><path d="M0.9,4.2 Q0.9,0.9 4.2,0.9 L6.8,0.9 Q10.1,0.9 10.1,4.2 L10.1,7.2 Q10.1,11.9 5.5,11.9 Q0.9,11.9 0.9,7.2 Z" fill="#fff" stroke="#959595" stroke-width="1.15"/><line x1="1" y1="4.9" x2="10" y2="4.9" stroke="#a0a0a0" stroke-width="1"/><line x1="5.5" y1="1" x2="5.5" y2="4.9" stroke="#b0b0b0" stroke-width="0.9"/><rect x="1.9" y="1.9" width="2.7" height="2.3" fill="#f79b4a"/></svg>
<div class="t" style="top:364.27px;font-size:13.5px;font-weight:400;color:#1e1e1e;left:1683px;">Terminübersicht</div>
<div style="position:absolute;left:1653px;top:402px;width:232px;height:22.6px;background:#02569f;"></div>
<div class="t" style="top:407.67px;font-size:12.2px;font-weight:700;color:#fff;right:39.5px;">Exporte</div>
<svg style="position:absolute;left:1662px;top:433.0px;" width="12" height="13" viewBox="0 0 12 13"><path d="M0.9,4.2 Q0.9,0.9 4.2,0.9 L6.8,0.9 Q10.1,0.9 10.1,4.2 L10.1,7.2 Q10.1,11.9 5.5,11.9 Q0.9,11.9 0.9,7.2 Z" fill="#fff" stroke="#959595" stroke-width="1.15"/><line x1="1" y1="4.9" x2="10" y2="4.9" stroke="#a0a0a0" stroke-width="1"/><line x1="5.5" y1="1" x2="5.5" y2="4.9" stroke="#b0b0b0" stroke-width="0.9"/><rect x="1.9" y="1.9" width="2.7" height="2.3" fill="#f79b4a"/></svg>
<div class="t" style="top:433.27px;font-size:13.5px;font-weight:400;color:#1e1e1e;left:1683px;">Analysen der Auswertung</div>
<svg style="position:absolute;left:1662px;top:458.0px;" width="12" height="13" viewBox="0 0 12 13"><path d="M0.9,4.2 Q0.9,0.9 4.2,0.9 L6.8,0.9 Q10.1,0.9 10.1,4.2 L10.1,7.2 Q10.1,11.9 5.5,11.9 Q0.9,11.9 0.9,7.2 Z" fill="#fff" stroke="#959595" stroke-width="1.15"/><line x1="1" y1="4.9" x2="10" y2="4.9" stroke="#a0a0a0" stroke-width="1"/><line x1="5.5" y1="1" x2="5.5" y2="4.9" stroke="#b0b0b0" stroke-width="0.9"/><rect x="1.9" y="1.9" width="2.7" height="2.3" fill="#f79b4a"/></svg>
<div class="t" style="top:458.27px;font-size:13.5px;font-weight:400;color:#1e1e1e;left:1683px;">Excel - Export</div>
<svg style="position:absolute;left:1662px;top:483.0px;" width="12" height="13" viewBox="0 0 12 13"><path d="M0.9,4.2 Q0.9,0.9 4.2,0.9 L6.8,0.9 Q10.1,0.9 10.1,4.2 L10.1,7.2 Q10.1,11.9 5.5,11.9 Q0.9,11.9 0.9,7.2 Z" fill="#fff" stroke="#959595" stroke-width="1.15"/><line x1="1" y1="4.9" x2="10" y2="4.9" stroke="#a0a0a0" stroke-width="1"/><line x1="5.5" y1="1" x2="5.5" y2="4.9" stroke="#b0b0b0" stroke-width="0.9"/><rect x="1.9" y="1.9" width="2.7" height="2.3" fill="#f79b4a"/></svg>
<div class="t" style="top:483.27px;font-size:13.5px;font-weight:400;color:#1e1e1e;left:1683px;">Word - Export</div>
<div style="position:absolute;left:1653px;top:522px;width:232px;height:22.6px;background:#02569f;"></div>
<div class="t" style="top:527.67px;font-size:12.2px;font-weight:700;color:#fff;right:39.5px;">Import</div>
<svg style="position:absolute;left:1662px;top:553.0px;" width="12" height="13" viewBox="0 0 12 13"><path d="M0.9,4.2 Q0.9,0.9 4.2,0.9 L6.8,0.9 Q10.1,0.9 10.1,4.2 L10.1,7.2 Q10.1,11.9 5.5,11.9 Q0.9,11.9 0.9,7.2 Z" fill="#fff" stroke="#959595" stroke-width="1.15"/><line x1="1" y1="4.9" x2="10" y2="4.9" stroke="#a0a0a0" stroke-width="1"/><line x1="5.5" y1="1" x2="5.5" y2="4.9" stroke="#b0b0b0" stroke-width="0.9"/><rect x="1.9" y="1.9" width="2.7" height="2.3" fill="#f79b4a"/></svg>
<div class="t" style="top:553.27px;font-size:13.5px;font-weight:400;color:#1e1e1e;left:1683px;">externe Auswertung</div>
<div style="position:absolute;left:1653px;top:591px;width:232px;height:22.6px;background:#02569f;"></div>
<div class="t" style="top:596.67px;font-size:12.2px;font-weight:700;color:#fff;right:39.5px;">für externe Prüfer</div>
<svg style="position:absolute;left:1662px;top:622.0px;" width="12" height="13" viewBox="0 0 12 13"><path d="M0.9,4.2 Q0.9,0.9 4.2,0.9 L6.8,0.9 Q10.1,0.9 10.1,4.2 L10.1,7.2 Q10.1,11.9 5.5,11.9 Q0.9,11.9 0.9,7.2 Z" fill="#fff" stroke="#959595" stroke-width="1.15"/><line x1="1" y1="4.9" x2="10" y2="4.9" stroke="#a0a0a0" stroke-width="1"/><line x1="5.5" y1="1" x2="5.5" y2="4.9" stroke="#b0b0b0" stroke-width="0.9"/><rect x="1.9" y="1.9" width="2.7" height="2.3" fill="#f79b4a"/></svg>
<div class="t" style="top:622.27px;font-size:13.5px;font-weight:400;color:#1e1e1e;left:1683px;">Bookmark</div>
<svg style="position:absolute;left:1662px;top:647.0px;" width="12" height="13" viewBox="0 0 12 13"><path d="M0.9,4.2 Q0.9,0.9 4.2,0.9 L6.8,0.9 Q10.1,0.9 10.1,4.2 L10.1,7.2 Q10.1,11.9 5.5,11.9 Q0.9,11.9 0.9,7.2 Z" fill="#fff" stroke="#959595" stroke-width="1.15"/><line x1="1" y1="4.9" x2="10" y2="4.9" stroke="#a0a0a0" stroke-width="1"/><line x1="5.5" y1="1" x2="5.5" y2="4.9" stroke="#b0b0b0" stroke-width="0.9"/><rect x="1.9" y="1.9" width="2.7" height="2.3" fill="#f79b4a"/></svg>
<div class="t" style="top:647.27px;font-size:13.5px;font-weight:400;color:#1e1e1e;left:1683px;">Downloadlink</div>
<svg style="position:absolute;left:1662px;top:672.0px;" width="12" height="13" viewBox="0 0 12 13"><path d="M0.9,4.2 Q0.9,0.9 4.2,0.9 L6.8,0.9 Q10.1,0.9 10.1,4.2 L10.1,7.2 Q10.1,11.9 5.5,11.9 Q0.9,11.9 0.9,7.2 Z" fill="#fff" stroke="#959595" stroke-width="1.15"/><line x1="1" y1="4.9" x2="10" y2="4.9" stroke="#a0a0a0" stroke-width="1"/><line x1="5.5" y1="1" x2="5.5" y2="4.9" stroke="#b0b0b0" stroke-width="0.9"/><rect x="1.9" y="1.9" width="2.7" height="2.3" fill="#f79b4a"/></svg>
<div class="t" style="top:672.27px;font-size:13.5px;font-weight:400;color:#1e1e1e;left:1683px;">Export für externer Prüfer</div>
<div style="position:absolute;left:1653px;top:710px;width:232px;height:22.6px;background:#02569f;"></div>
<div class="t" style="top:715.67px;font-size:12.2px;font-weight:700;color:#fff;right:39.5px;">zusätzliche Informationen</div>
<svg style="position:absolute;left:1662px;top:741.0px;" width="12" height="13" viewBox="0 0 12 13"><path d="M0.9,4.2 Q0.9,0.9 4.2,0.9 L6.8,0.9 Q10.1,0.9 10.1,4.2 L10.1,7.2 Q10.1,11.9 5.5,11.9 Q0.9,11.9 0.9,7.2 Z" fill="#fff" stroke="#959595" stroke-width="1.15"/><line x1="1" y1="4.9" x2="10" y2="4.9" stroke="#a0a0a0" stroke-width="1"/><line x1="5.5" y1="1" x2="5.5" y2="4.9" stroke="#b0b0b0" stroke-width="0.9"/><rect x="1.9" y="1.9" width="2.7" height="2.3" fill="#f79b4a"/></svg>
<div class="t" style="top:741.27px;font-size:13.5px;font-weight:400;color:#1e1e1e;left:1683px;">Vergabegrunddaten</div>
<svg style="position:absolute;left:1662px;top:766.0px;" width="12" height="13" viewBox="0 0 12 13"><path d="M0.9,4.2 Q0.9,0.9 4.2,0.9 L6.8,0.9 Q10.1,0.9 10.1,4.2 L10.1,7.2 Q10.1,11.9 5.5,11.9 Q0.9,11.9 0.9,7.2 Z" fill="#fff" stroke="#959595" stroke-width="1.15"/><line x1="1" y1="4.9" x2="10" y2="4.9" stroke="#a0a0a0" stroke-width="1"/><line x1="5.5" y1="1" x2="5.5" y2="4.9" stroke="#b0b0b0" stroke-width="0.9"/><rect x="1.9" y="1.9" width="2.7" height="2.3" fill="#f79b4a"/></svg>
<div class="t" style="top:766.27px;font-size:13.5px;font-weight:400;color:#1e1e1e;left:1683px;">Unterlagen</div>
<svg style="position:absolute;left:1662px;top:791.0px;" width="12" height="13" viewBox="0 0 12 13"><path d="M0.9,4.2 Q0.9,0.9 4.2,0.9 L6.8,0.9 Q10.1,0.9 10.1,4.2 L10.1,7.2 Q10.1,11.9 5.5,11.9 Q0.9,11.9 0.9,7.2 Z" fill="#fff" stroke="#959595" stroke-width="1.15"/><line x1="1" y1="4.9" x2="10" y2="4.9" stroke="#a0a0a0" stroke-width="1"/><line x1="5.5" y1="1" x2="5.5" y2="4.9" stroke="#b0b0b0" stroke-width="0.9"/><rect x="1.9" y="1.9" width="2.7" height="2.3" fill="#f79b4a"/></svg>
<div class="t" style="top:791.27px;font-size:13.5px;font-weight:400;color:#1e1e1e;left:1683px;">Dateiablage</div>
<svg style="position:absolute;left:1662px;top:816.0px;" width="12" height="13" viewBox="0 0 12 13"><path d="M0.9,4.2 Q0.9,0.9 4.2,0.9 L6.8,0.9 Q10.1,0.9 10.1,4.2 L10.1,7.2 Q10.1,11.9 5.5,11.9 Q0.9,11.9 0.9,7.2 Z" fill="#fff" stroke="#959595" stroke-width="1.15"/><line x1="1" y1="4.9" x2="10" y2="4.9" stroke="#a0a0a0" stroke-width="1"/><line x1="5.5" y1="1" x2="5.5" y2="4.9" stroke="#b0b0b0" stroke-width="0.9"/><rect x="1.9" y="1.9" width="2.7" height="2.3" fill="#f79b4a"/></svg>
<div class="t" style="top:816.27px;font-size:13.5px;font-weight:400;color:#1e1e1e;left:1683px;">Öffnungsliste</div>
<svg style="position:absolute;left:1662px;top:841.0px;" width="12" height="13" viewBox="0 0 12 13"><path d="M0.9,4.2 Q0.9,0.9 4.2,0.9 L6.8,0.9 Q10.1,0.9 10.1,4.2 L10.1,7.2 Q10.1,11.9 5.5,11.9 Q0.9,11.9 0.9,7.2 Z" fill="#fff" stroke="#959595" stroke-width="1.15"/><line x1="1" y1="4.9" x2="10" y2="4.9" stroke="#a0a0a0" stroke-width="1"/><line x1="5.5" y1="1" x2="5.5" y2="4.9" stroke="#b0b0b0" stroke-width="0.9"/><rect x="1.9" y="1.9" width="2.7" height="2.3" fill="#f79b4a"/></svg>
<div class="t" style="top:841.27px;font-size:13.5px;font-weight:400;color:#1e1e1e;left:1683px;">Terminübersicht</div>
<div style="position:absolute;left:1653px;top:880px;width:232px;height:22.6px;background:#02569f;"></div>
<div class="t" style="top:885.67px;font-size:12.2px;font-weight:700;color:#fff;right:39.5px;">Kommunikation</div>
<svg style="position:absolute;left:1662px;top:911.0px;" width="12" height="13" viewBox="0 0 12 13"><path d="M0.9,4.2 Q0.9,0.9 4.2,0.9 L6.8,0.9 Q10.1,0.9 10.1,4.2 L10.1,7.2 Q10.1,11.9 5.5,11.9 Q0.9,11.9 0.9,7.2 Z" fill="#fff" stroke="#959595" stroke-width="1.15"/><line x1="1" y1="4.9" x2="10" y2="4.9" stroke="#a0a0a0" stroke-width="1"/><line x1="5.5" y1="1" x2="5.5" y2="4.9" stroke="#b0b0b0" stroke-width="0.9"/><rect x="1.9" y="1.9" width="2.7" height="2.3" fill="#f79b4a"/></svg>
<div class="t" style="top:911.27px;font-size:13.5px;font-weight:400;color:#1e1e1e;left:1683px;">Nachforderungen</div>
<div style="position:absolute;left:1653px;top:949px;width:232px;height:22.6px;background:#02569f;"></div>
<div class="t" style="top:954.67px;font-size:12.2px;font-weight:700;color:#fff;right:39.5px;">Submissionsprotokolle</div>
<div style="position:absolute;left:1808px;top:762px;width:72px;height:72px;border-radius:50%;background:#0566b5;box-shadow:0 3px 12px rgba(0,0,0,0.25);"></div>
<svg style="position:absolute;left:1820px;top:775px;" width="50" height="48" viewBox="0 0 50 48"><path d="M23.8,1 C36.4,1 46.2,10 46.2,22.4 C46.2,27.6 44.6,31.6 41.6,34.6 L43.4,45 L33,43.6 C30,44.8 27,45.2 23.8,45.2 C11.6,45.2 1.8,35.4 1.8,23 C1.8,10.6 11.6,1 23.8,1 Z" fill="#fff"/><g stroke="#0566b5" stroke-width="4.2" stroke-linecap="round"><line x1="16.2" y1="16" x2="32.2" y2="16"/><line x1="16.2" y1="23.6" x2="32.2" y2="23.6"/><line x1="16.2" y1="31" x2="25.6" y2="31"/></g></svg>
<svg style="position:absolute;left:1851px;top:894px;" width="28" height="28" viewBox="0 0 28 28"><circle cx="14" cy="14" r="13.8" fill="#3c9fe1"/><circle cx="14" cy="7.4" r="2.6" fill="#fff"/><path d="M10.6,11.4 L16.2,11.4 L16.2,20.4 L18.2,20.4 L18.2,23.4 L10,23.4 L10,20.4 L12,20.4 L12,14.2 L10.6,14.2 Z" fill="#fff"/></svg>
<div style="position:absolute;left:1908px;top:1px;width:5px;height:971px;background:#f1f1f1;"></div>
<div style="position:absolute;left:1908px;top:1px;width:5px;height:639px;background:#c8c8c8;"></div>
<svg style="position:absolute;left:186px;top:737px;" width="16" height="22" viewBox="0 0 16 22"><path d="M2.5,1.3 L2.5,17.3 L6.5,13.6 L9.6,19.6 Q10.2,20.3 11.2,19.8 L11.6,19.5 Q12.3,19 12,18.2 L9.4,12.4 L13.8,12.3 Q14.6,12.1 13.9,11.3 Z" fill="#fff" stroke="#15161f" stroke-width="1.15" stroke-linejoin="round"/></svg>
</div></body></html>
